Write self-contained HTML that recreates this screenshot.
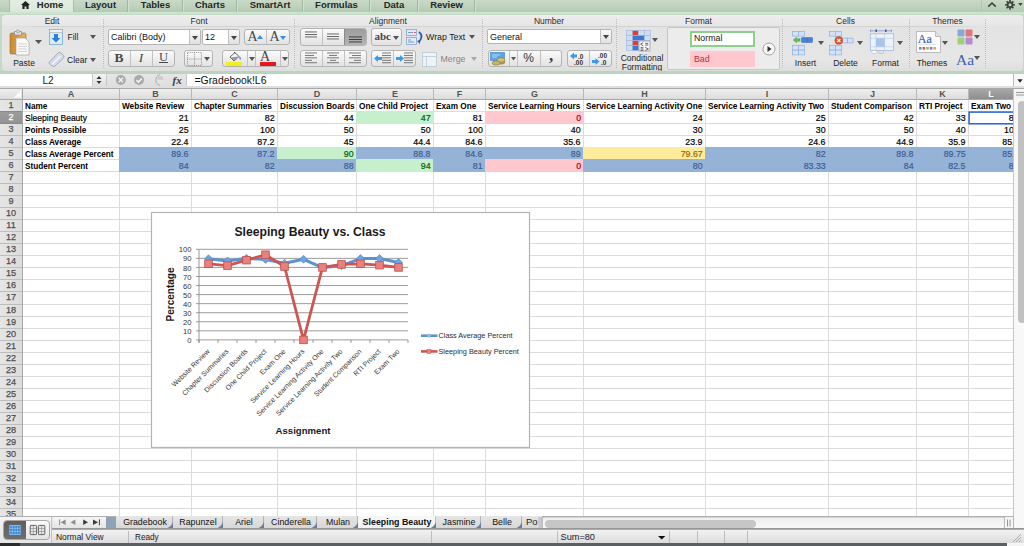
<!DOCTYPE html>
<html><head><meta charset="utf-8"><style>
*{margin:0;padding:0;box-sizing:border-box}
html,body{width:1024px;height:546px;overflow:hidden;background:#fff;font-family:"Liberation Sans", sans-serif;}
div{position:absolute}
.t{white-space:nowrap;line-height:1}
.btn{background:linear-gradient(#fbfbfb,#e2e2e2);border:1px solid #b3b3b3;border-radius:3px}
.sep{border-left:1px dotted #b8b8b8}
</style></head><body>

<div style="left:0px;top:0px;width:1024px;height:13px;background:linear-gradient(#c9dac7,#b3c9b1);"></div>
<div style="left:9px;top:0px;width:65px;height:14px;background:linear-gradient(#e4eee3,#d8e6d7);border-left:1px solid #a9c0a7;border-right:1px solid #a9c0a7;"></div>
<div style="left:127px;top:0px;width:1px;height:12.5px;background:#a0b89e;"></div>
<div style="left:128px;top:0px;width:1px;height:12.5px;background:#d3e1d1;"></div>
<div style="left:182px;top:0px;width:1px;height:12.5px;background:#a0b89e;"></div>
<div style="left:183px;top:0px;width:1px;height:12.5px;background:#d3e1d1;"></div>
<div style="left:236px;top:0px;width:1px;height:12.5px;background:#a0b89e;"></div>
<div style="left:237px;top:0px;width:1px;height:12.5px;background:#d3e1d1;"></div>
<div style="left:302px;top:0px;width:1px;height:12.5px;background:#a0b89e;"></div>
<div style="left:303px;top:0px;width:1px;height:12.5px;background:#d3e1d1;"></div>
<div style="left:369px;top:0px;width:1px;height:12.5px;background:#a0b89e;"></div>
<div style="left:370px;top:0px;width:1px;height:12.5px;background:#d3e1d1;"></div>
<div style="left:417px;top:0px;width:1px;height:12.5px;background:#a0b89e;"></div>
<div style="left:418px;top:0px;width:1px;height:12.5px;background:#d3e1d1;"></div>
<div style="left:474px;top:0px;width:1px;height:12.5px;background:#a0b89e;"></div>
<div style="left:475px;top:0px;width:1px;height:12.5px;background:#d3e1d1;"></div>
<svg style="position:absolute;left:20.5px;top:0.7px" width="9" height="8" viewBox="0 0 9 8"><path d="M4.5 0 L9 4 L7.6 4 L7.6 8 L5.4 8 L5.4 5.4 L3.6 5.4 L3.6 8 L1.4 8 L1.4 4 L0 4 Z" fill="#222"/></svg>
<div class="t" style="left:-150.0px;width:400px;text-align:center;top:0.2px;font-size:9.5px;font-weight:bold;color:#262626;transform:scaleX(1.0);transform-origin:50% 0;">Home</div>
<div class="t" style="left:-99.5px;width:400px;text-align:center;top:0.2px;font-size:9.5px;font-weight:bold;color:#262626;transform:scaleX(1.0);transform-origin:50% 0;">Layout</div>
<div class="t" style="left:-44.5px;width:400px;text-align:center;top:0.2px;font-size:9.5px;font-weight:bold;color:#262626;transform:scaleX(1.0);transform-origin:50% 0;">Tables</div>
<div class="t" style="left:10.0px;width:400px;text-align:center;top:0.2px;font-size:9.5px;font-weight:bold;color:#262626;transform:scaleX(1.0);transform-origin:50% 0;">Charts</div>
<div class="t" style="left:70.0px;width:400px;text-align:center;top:0.2px;font-size:9.5px;font-weight:bold;color:#262626;transform:scaleX(1.0);transform-origin:50% 0;">SmartArt</div>
<div class="t" style="left:136.5px;width:400px;text-align:center;top:0.2px;font-size:9.5px;font-weight:bold;color:#262626;transform:scaleX(1.0);transform-origin:50% 0;">Formulas</div>
<div class="t" style="left:194.0px;width:400px;text-align:center;top:0.2px;font-size:9.5px;font-weight:bold;color:#262626;transform:scaleX(1.0);transform-origin:50% 0;">Data</div>
<div class="t" style="left:246.5px;width:400px;text-align:center;top:0.2px;font-size:9.5px;font-weight:bold;color:#262626;transform:scaleX(1.0);transform-origin:50% 0;">Review</div>
<div style="left:981px;top:0px;width:1px;height:11px;background:#b2c6b0;"></div>
<svg style="position:absolute;left:987px;top:1px" width="10" height="7" viewBox="0 0 10 7"><path d="M1.3 5.6 L5 2 L8.7 5.6" stroke="#3a3f3a" stroke-width="1.5" fill="none"/></svg>
<svg style="position:absolute;left:1003px;top:0px" width="21" height="12" viewBox="0 0 21 12"><path d="M10.29 3.93 L11.83 3.97 L11.83 5.63 L10.29 5.67 L9.94 6.51 L11.00 7.63 L9.83 8.80 L8.71 7.74 L7.87 8.09 L7.83 9.63 L6.17 9.63 L6.13 8.09 L5.29 7.74 L4.17 8.80 L3.00 7.63 L4.06 6.51 L3.71 5.67 L2.17 5.63 L2.17 3.97 L3.71 3.93 L4.06 3.09 L3.00 1.97 L4.17 0.80 L5.29 1.86 L6.13 1.51 L6.17 -0.03 L7.83 -0.03 L7.87 1.51 L8.71 1.86 L9.83 0.80 L11.00 1.97 L9.94 3.09 Z" fill="#3f463f"/><circle cx="7" cy="4.8" r="1.5" fill="#c3d3c1"/><path d="M15.2 3 L19.6 3 L17.4 6 Z" fill="#3f463f"/></svg>
<div style="left:0px;top:13px;width:1024px;height:60px;background:#c4dac6;"></div>
<div style="left:0px;top:12px;width:1024px;height:2px;background:#cfe3d2;"></div>
<div style="left:2px;top:15px;width:1020.5px;height:56px;background:linear-gradient(#ececec,#e3e3e3 20%,#e6e6e6 80%,#dedede);border-radius:4px;"></div>
<div style="left:2px;top:15px;width:1020.5px;height:11px;background:linear-gradient(#ededed,#e6e6e6);border-radius:4px 4px 0 0;"></div>
<div style="left:8px;top:26px;width:977px;height:1px;background:linear-gradient(90deg,#e4e4e4,#d3d3d3 3%,#d3d3d3 97%,#e4e4e4);"></div>
<div class="t" style="left:-148px;width:400px;text-align:center;top:16.5px;font-size:8.5px;font-weight:normal;color:#2b2b2b;transform:scaleX(1.0);transform-origin:50% 0;">Edit</div>
<div class="t" style="left:-1px;width:400px;text-align:center;top:16.5px;font-size:8.5px;font-weight:normal;color:#2b2b2b;transform:scaleX(1.0);transform-origin:50% 0;">Font</div>
<div class="t" style="left:188px;width:400px;text-align:center;top:16.5px;font-size:8.5px;font-weight:normal;color:#2b2b2b;transform:scaleX(1.0);transform-origin:50% 0;">Alignment</div>
<div class="t" style="left:349px;width:400px;text-align:center;top:16.5px;font-size:8.5px;font-weight:normal;color:#2b2b2b;transform:scaleX(1.0);transform-origin:50% 0;">Number</div>
<div class="t" style="left:498.5px;width:400px;text-align:center;top:16.5px;font-size:8.5px;font-weight:normal;color:#2b2b2b;transform:scaleX(1.0);transform-origin:50% 0;">Format</div>
<div class="t" style="left:645.5px;width:400px;text-align:center;top:16.5px;font-size:8.5px;font-weight:normal;color:#2b2b2b;transform:scaleX(1.0);transform-origin:50% 0;">Cells</div>
<div class="t" style="left:747.5px;width:400px;text-align:center;top:16.5px;font-size:8.5px;font-weight:normal;color:#2b2b2b;transform:scaleX(1.0);transform-origin:50% 0;">Themes</div>
<div style="left:103px;top:19px;width:1px;height:49px;border-left:1px dotted #bdbdbd;"></div>
<div style="left:294px;top:19px;width:1px;height:49px;border-left:1px dotted #bdbdbd;"></div>
<div style="left:482px;top:19px;width:1px;height:49px;border-left:1px dotted #bdbdbd;"></div>
<div style="left:616px;top:19px;width:1px;height:49px;border-left:1px dotted #bdbdbd;"></div>
<div style="left:782px;top:19px;width:1px;height:49px;border-left:1px dotted #bdbdbd;"></div>
<div style="left:909px;top:19px;width:1px;height:49px;border-left:1px dotted #bdbdbd;"></div>
<div style="left:985px;top:19px;width:1px;height:49px;border-left:1px dotted #bdbdbd;"></div>
<svg style="position:absolute;left:9px;top:29px" width="22" height="27" viewBox="0 0 22 27">
<defs><linearGradient id="cb" x1="0" x2="1"><stop offset="0" stop-color="#c98a2e"/><stop offset="1" stop-color="#e7b25c"/></linearGradient></defs>
<rect x="1" y="4" width="16" height="21" rx="1.5" fill="url(#cb)" stroke="#9b6a23" stroke-width="0.6"/>
<path d="M5.5 2.5 h7 v3.5 h-7 z" fill="#e8e8e8" stroke="#777" stroke-width="0.6"/>
<circle cx="9" cy="2.5" r="1.6" fill="#ddd" stroke="#777" stroke-width="0.5"/>
<path d="M7 9 h9 l4 4 v13 h-13 z" fill="#fafafa" stroke="#999" stroke-width="0.6"/>
<path d="M9 15h9M9 17.5h9M9 20h9M9 22.5h9" stroke="#bbb" stroke-width="0.6"/>
</svg>
<svg style="position:absolute;left:35px;top:40px" width="7" height="5"><path d="M0 0 L7 0 L3.5 4 Z" fill="#555"/></svg>
<div class="t" style="left:-176px;width:400px;text-align:center;top:59px;font-size:8.5px;font-weight:normal;color:#222;transform:scaleX(1.0);transform-origin:50% 0;">Paste</div>
<svg style="position:absolute;left:49px;top:29px" width="14" height="16" viewBox="0 0 14 16">
<rect x="0.5" y="0.5" width="13" height="15" fill="#d8ecfb" stroke="#7aa7cc" stroke-width="0.8"/>
<rect x="0.5" y="0.5" width="13" height="3" fill="#f2f2f2" stroke="#999" stroke-width="0.5"/>
<path d="M5 5 h4 v4 h2.5 l-4.5 4.5 l-4.5 -4.5 h2.5 z" fill="#2f7fd6"/>
</svg>
<div class="t" style="left:67.5px;top:33px;font-size:8.5px;font-weight:normal;color:#222;transform:scaleX(1.0);transform-origin:0 0;">Fill</div>
<svg style="position:absolute;left:90px;top:35px" width="7" height="5"><path d="M0 0 L6 0 L3 4 Z" fill="#555"/></svg>
<svg style="position:absolute;left:48px;top:51px" width="17" height="16" viewBox="0 0 17 16">
<path d="M1.5 11 L10 2 Q11.5 0.8 13 2 L15.5 4.5 Q16.5 6 15.5 7 L7 15 Q5.5 16 4 15 L1.5 12.8 Q0.5 12 1.5 11 Z" fill="#d7dde8" stroke="#8c94a3" stroke-width="0.7"/>
<path d="M4 13.5 L12.5 5" stroke="#f4f6fa" stroke-width="1.2"/>
</svg>
<div class="t" style="left:67px;top:55.5px;font-size:8.5px;font-weight:normal;color:#222;transform:scaleX(1.0);transform-origin:0 0;">Clear</div>
<svg style="position:absolute;left:90px;top:57.5px" width="7" height="5"><path d="M0 0 L6 0 L3 4 Z" fill="#555"/></svg>
<div style="left:108px;top:29px;width:93px;height:16px;background:#fff;border:1px solid #b5b5b5;border-radius:2px;"></div>
<div style="left:189px;top:30px;width:11px;height:14px;background:linear-gradient(#fafafa,#e0e0e0);border-left:1px solid #c0c0c0;"></div>
<div class="t" style="left:111px;top:33px;font-size:9px;font-weight:normal;color:#111;transform:scaleX(1.0);transform-origin:0 0;">Calibri (Body)</div>
<svg style="position:absolute;left:192px;top:35.5px" width="6" height="4"><path d="M0 0 L6 0 L3 4 Z" fill="#444"/></svg>
<div style="left:202px;top:29px;width:38px;height:16px;background:#fff;border:1px solid #b5b5b5;border-radius:2px;"></div>
<div style="left:228px;top:30px;width:11px;height:14px;background:linear-gradient(#fafafa,#e0e0e0);border-left:1px solid #c0c0c0;"></div>
<div class="t" style="left:205px;top:33px;font-size:9px;font-weight:normal;color:#111;transform:scaleX(1.0);transform-origin:0 0;">12</div>
<svg style="position:absolute;left:231px;top:35.5px" width="6" height="4"><path d="M0 0 L6 0 L3 4 Z" fill="#444"/></svg>
<div class="btn" style="left:244px;top:29px;width:46px;height:16px;"></div>
<div style="left:266px;top:30px;width:1px;height:14px;background:#c2c2c2;"></div>
<div class="t" style="left:247.5px;top:29.5px;font-size:14px;font-weight:normal;color:#444;transform:scaleX(1.0);transform-origin:0 0;font-family:&quot;Liberation Serif&quot;,serif;">A</div>
<svg style="position:absolute;left:257px;top:35px" width="6" height="4"><path d="M0 4 L6 4 L3 0 Z" fill="#3a8ee6"/></svg>
<div class="t" style="left:269.5px;top:29.5px;font-size:14px;font-weight:normal;color:#444;transform:scaleX(1.0);transform-origin:0 0;font-family:&quot;Liberation Serif&quot;,serif;">A</div>
<svg style="position:absolute;left:280px;top:36px" width="6" height="4"><path d="M0 0 L6 0 L3 4 Z" fill="#3a8ee6"/></svg>
<div class="btn" style="left:108px;top:50px;width:67px;height:17px;"></div>
<div style="left:130px;top:51px;width:1px;height:15px;background:#c2c2c2;"></div>
<div style="left:152px;top:51px;width:1px;height:15px;background:#c2c2c2;"></div>
<div class="t" style="left:-81px;width:400px;text-align:center;top:50.5px;font-size:13.5px;font-weight:bold;color:#484848;transform:scaleX(1.0);transform-origin:50% 0;font-family:&quot;Liberation Serif&quot;,serif;">B</div>
<div class="t" style="left:-59px;width:400px;text-align:center;top:50.5px;font-size:13.5px;font-weight:normal;color:#484848;transform:scaleX(1.0);transform-origin:50% 0;font-family:&quot;Liberation Serif&quot;,serif;font-style:italic;">I</div>
<div class="t" style="left:-36.5px;width:400px;text-align:center;top:51px;font-size:12.5px;font-weight:normal;color:#484848;transform:scaleX(1.0);transform-origin:50% 0;font-family:&quot;Liberation Serif&quot;,serif;text-decoration:underline;">U</div>
<div class="btn" style="left:184px;top:50px;width:29px;height:17px;"></div>
<svg style="position:absolute;left:187px;top:51.5px" width="15" height="14"><path d="M0.5 0.5h14v13h-14z M7.5 0v14 M0 7h15" stroke="#8a8a8a" stroke-width="0.8" stroke-dasharray="1.2 0.9" fill="none"/></svg>
<svg style="position:absolute;left:204px;top:57px" width="6" height="4"><path d="M0 0 L6 0 L3 4 Z" fill="#555"/></svg>
<div class="btn" style="left:222px;top:50px;width:67px;height:17px;"></div>
<div style="left:247px;top:51px;width:1px;height:15px;background:#c2c2c2;"></div>
<div style="left:255px;top:51px;width:1px;height:15px;background:#c2c2c2;"></div>
<div style="left:280px;top:51px;width:1px;height:15px;background:#c2c2c2;"></div>
<svg style="position:absolute;left:227px;top:51px" width="16" height="11" viewBox="0 0 16 11"><path d="M3 6 L8 1.5 L12 5.5 L7 10 Z" fill="#f4f4f4" stroke="#444" stroke-width="0.8"/><path d="M4 6.5 L11 5.5 L7 9.5 Z" fill="#999"/><path d="M12.5 5 q2 2 1 4 q-1.5 -1 -1 -4" fill="#2a6bcf"/><path d="M7 1 l1.5 1.5" stroke="#444"/></svg>
<div style="left:226px;top:62px;width:16px;height:4px;background:#f2ee1a;"></div>
<svg style="position:absolute;left:249px;top:57px" width="6" height="4"><path d="M0 0 L6 0 L3 4 Z" fill="#555"/></svg>
<div class="t" style="left:260px;top:49.5px;font-size:14px;font-weight:normal;color:#444;transform:scaleX(1.0);transform-origin:0 0;font-family:&quot;Liberation Serif&quot;,serif;">A</div>
<div style="left:260px;top:62px;width:16px;height:4px;background:#e8151b;"></div>
<svg style="position:absolute;left:282px;top:57px" width="6" height="4"><path d="M0 0 L6 0 L3 4 Z" fill="#555"/></svg>
<div class="btn" style="left:300px;top:28px;width:67px;height:18px;"></div>
<div style="left:345px;top:29px;width:21px;height:16px;background:linear-gradient(#9c9c9c,#b4b4b4);border-radius:0 2px 2px 0;"></div>
<div style="left:322px;top:29px;width:1px;height:16px;background:#c2c2c2;"></div>
<div style="left:344px;top:29px;width:1px;height:16px;background:#8a8a8a;"></div>
<svg style="position:absolute;left:305px;top:30.5px" width="12" height="9.5"><rect x="0" y="0.5" width="12" height="0.9" fill="#5a5a5a"/><rect x="0" y="3.0" width="12" height="0.9" fill="#5a5a5a"/><rect x="0" y="5.5" width="12" height="0.9" fill="#5a5a5a"/></svg>
<svg style="position:absolute;left:327px;top:33px" width="12" height="9.5"><rect x="0" y="0.5" width="12" height="0.9" fill="#5a5a5a"/><rect x="0" y="3.0" width="12" height="0.9" fill="#5a5a5a"/><rect x="0" y="5.5" width="12" height="0.9" fill="#5a5a5a"/></svg>
<svg style="position:absolute;left:349px;top:35.5px" width="13" height="9.5"><rect x="0" y="0.5" width="13" height="0.9" fill="#333"/><rect x="0" y="3.0" width="13" height="0.9" fill="#333"/><rect x="0" y="5.5" width="13" height="0.9" fill="#333"/></svg>
<div class="btn" style="left:371px;top:28px;width:31px;height:18px;"></div>
<div class="t" style="left:374.5px;top:31.2px;font-size:11px;font-weight:bold;color:#4a4a4a;transform:scaleX(1.0);transform-origin:0 0;font-family:&quot;Liberation Serif&quot;,serif;">abc</div>
<svg style="position:absolute;left:393px;top:35.5px" width="6" height="4"><path d="M0 0 L6 0 L3 4 Z" fill="#555"/></svg>
<svg style="position:absolute;left:406px;top:29px" width="19" height="16" viewBox="0 0 19 16">
<rect x="0.5" y="0.5" width="10" height="6" fill="#dfe9f7" stroke="#7b9ccb" stroke-width="0.7"/>
<rect x="0.5" y="8.5" width="10" height="7" fill="#dfe9f7" stroke="#7b9ccb" stroke-width="0.7"/>
<path d="M2 3.5h5M2 11h3M2 13h6" stroke="#6686b3" stroke-width="0.8"/><path d="M8 3.5h2" stroke="#e33" stroke-width="0.8"/>
<path d="M13 3 q5 4 0 10" stroke="#1f5fae" stroke-width="1.8" fill="none"/><path d="M11 12 l3 3 l0 -4 z" fill="#1f5fae"/>
</svg>
<div class="t" style="left:426px;top:33px;font-size:8.8px;font-weight:normal;color:#1a1a1a;transform:scaleX(1.0);transform-origin:0 0;">Wrap Text</div>
<svg style="position:absolute;left:469px;top:35px" width="6" height="4"><path d="M0 0 L6 0 L3 4 Z" fill="#555"/></svg>
<div class="btn" style="left:300px;top:50px;width:67px;height:17px;"></div>
<div style="left:322px;top:51px;width:1px;height:15px;background:#c2c2c2;"></div>
<div style="left:344px;top:51px;width:1px;height:15px;background:#c2c2c2;"></div>
<svg style="position:absolute;left:305px;top:52.3px" width="12" height="14.25"><rect x="0" y="0.5" width="12" height="0.9" fill="#6a6a6a"/><rect x="0" y="2.95" width="9" height="0.9" fill="#6a6a6a"/><rect x="0" y="5.4" width="12" height="0.9" fill="#6a6a6a"/><rect x="0" y="7.8500000000000005" width="7" height="0.9" fill="#6a6a6a"/><rect x="0" y="10.3" width="12" height="0.9" fill="#6a6a6a"/></svg>
<svg style="position:absolute;left:327px;top:52.3px" width="12" height="14.25"><rect x="0.0" y="0.5" width="12" height="0.9" fill="#6a6a6a"/><rect x="2.0" y="2.95" width="8" height="0.9" fill="#6a6a6a"/><rect x="0.0" y="5.4" width="12" height="0.9" fill="#6a6a6a"/><rect x="3.0" y="7.8500000000000005" width="6" height="0.9" fill="#6a6a6a"/><rect x="0.0" y="10.3" width="12" height="0.9" fill="#6a6a6a"/></svg>
<svg style="position:absolute;left:349px;top:52.3px" width="12" height="14.25"><rect x="0" y="0.5" width="12" height="0.9" fill="#6a6a6a"/><rect x="3" y="2.95" width="9" height="0.9" fill="#6a6a6a"/><rect x="0" y="5.4" width="12" height="0.9" fill="#6a6a6a"/><rect x="5" y="7.8500000000000005" width="7" height="0.9" fill="#6a6a6a"/><rect x="0" y="10.3" width="12" height="0.9" fill="#6a6a6a"/></svg>
<div class="btn" style="left:371px;top:50px;width:45px;height:17px;"></div>
<div style="left:393px;top:51px;width:1px;height:15px;background:#c2c2c2;"></div>
<svg style="position:absolute;left:382px;top:52.3px" width="9" height="14.25"><rect x="0" y="0.5" width="9" height="0.9" fill="#6a6a6a"/><rect x="0" y="2.95" width="9" height="0.9" fill="#6a6a6a"/><rect x="0" y="5.4" width="9" height="0.9" fill="#6a6a6a"/><rect x="0" y="7.8500000000000005" width="9" height="0.9" fill="#6a6a6a"/><rect x="0" y="10.3" width="9" height="0.9" fill="#6a6a6a"/></svg>
<svg style="position:absolute;left:374px;top:55px" width="8" height="7"><path d="M0 3.5 L4 0 L4 2 L8 2 L8 5 L4 5 L4 7 Z" fill="#3b9be8"/></svg>
<svg style="position:absolute;left:404px;top:52.3px" width="9" height="14.25"><rect x="0" y="0.5" width="9" height="0.9" fill="#6a6a6a"/><rect x="0" y="2.95" width="9" height="0.9" fill="#6a6a6a"/><rect x="0" y="5.4" width="9" height="0.9" fill="#6a6a6a"/><rect x="0" y="7.8500000000000005" width="9" height="0.9" fill="#6a6a6a"/><rect x="0" y="10.3" width="9" height="0.9" fill="#6a6a6a"/></svg>
<svg style="position:absolute;left:396px;top:55px" width="8" height="7"><path d="M8 3.5 L4 0 L4 2 L0 2 L0 5 L4 5 L4 7 Z" fill="#3b9be8"/></svg>
<svg style="position:absolute;left:422px;top:52px" width="15" height="15"><rect x="0.5" y="0.5" width="14" height="14" fill="#eef3f7" stroke="#b9c7d3" stroke-width="0.8"/><path d="M0 4.5h15M4.5 4.5v10" stroke="#b9c7d3" stroke-width="0.8"/></svg>
<div class="t" style="left:440.5px;top:55px;font-size:8.8px;font-weight:normal;color:#858585;transform:scaleX(1.0);transform-origin:0 0;">Merge</div>
<svg style="position:absolute;left:471px;top:57px" width="6" height="4"><path d="M0 0 L6 0 L3 4 Z" fill="#aaa"/></svg>
<div style="left:487px;top:29px;width:125px;height:15px;background:#fff;border:1px solid #b5b5b5;border-radius:2px;"></div>
<div style="left:600px;top:30px;width:11px;height:13px;background:linear-gradient(#fafafa,#e0e0e0);border-left:1px solid #c0c0c0;"></div>
<div class="t" style="left:490px;top:32.5px;font-size:9px;font-weight:normal;color:#111;transform:scaleX(1.0);transform-origin:0 0;">General</div>
<svg style="position:absolute;left:603px;top:35px" width="6" height="4"><path d="M0 0 L6 0 L3 4 Z" fill="#444"/></svg>
<div class="btn" style="left:488px;top:50px;width:74px;height:17px;"></div>
<div style="left:509px;top:51px;width:1px;height:15px;background:#c2c2c2;"></div>
<div style="left:517px;top:51px;width:1px;height:15px;background:#c2c2c2;"></div>
<div style="left:540px;top:51px;width:1px;height:15px;background:#c2c2c2;"></div>
<svg style="position:absolute;left:490px;top:52px" width="18" height="14" viewBox="0 0 18 14"><rect x="0.5" y="0.5" width="14" height="8" fill="#5aa6e8" stroke="#3b7fc0" stroke-width="0.6"/><path d="M2 3h8M2 5h5" stroke="#cfe6fb" stroke-width="0.8"/><ellipse cx="11" cy="10" rx="4" ry="2.2" fill="#b5a35a" stroke="#7d6e2c" stroke-width="0.5"/><ellipse cx="11" cy="8" rx="4" ry="2.2" fill="#d2c27a" stroke="#7d6e2c" stroke-width="0.5"/><ellipse cx="6" cy="11" rx="4" ry="2.2" fill="#c7b66c" stroke="#7d6e2c" stroke-width="0.5"/></svg>
<svg style="position:absolute;left:511px;top:57px" width="5" height="4"><path d="M0 0 L5 0 L2.5 3.5 Z" fill="#555"/></svg>
<div class="t" style="left:328.5px;width:400px;text-align:center;top:52px;font-size:12px;font-weight:normal;color:#333;transform:scaleX(1.0);transform-origin:50% 0;">%</div>
<div class="t" style="left:351px;width:400px;text-align:center;top:46.5px;font-size:17px;font-weight:bold;color:#3a3a3a;transform:scaleX(1.0);transform-origin:50% 0;font-family:&quot;Liberation Serif&quot;,serif;">,</div>
<div class="btn" style="left:567px;top:50px;width:45px;height:17px;"></div>
<div style="left:589px;top:51px;width:1px;height:15px;background:#c2c2c2;"></div>
<svg style="position:absolute;left:569px;top:52px" width="19" height="13"><path d="M1 4 L5 0.5 L5 2.5 L8 2.5 L8 5.5 L5 5.5 L5 7.5 Z" fill="#3b9be8"/><text x="9" y="6.5" font-size="6.5" font-family="Liberation Sans" font-weight="bold" fill="#333">.0</text><text x="5" y="12.5" font-size="6.5" font-family="Liberation Sans" font-weight="bold" fill="#333">.00</text></svg>
<svg style="position:absolute;left:591px;top:52px" width="19" height="13"><text x="7" y="5.5" font-size="6.5" font-family="Liberation Sans" font-weight="bold" fill="#333">.00</text><path d="M8.5 9.5 L4.5 6 L4.5 8 L1 8 L1 11 L4.5 11 L4.5 13 Z" fill="#3b9be8"/><text x="10" y="12.5" font-size="6.5" font-family="Liberation Sans" font-weight="bold" fill="#333">.0</text></svg>
<svg style="position:absolute;left:626px;top:30px" width="26" height="22" viewBox="0 0 26 22">
<g stroke="#9fb8dc" stroke-width="0.6">
<rect x="0.5" y="0.5" width="6" height="5" fill="#cfdcf2"/><rect x="6.5" y="0.5" width="6" height="5" fill="#e53c2e"/><rect x="12.5" y="0.5" width="6" height="5" fill="#cfdcf2"/><rect x="18.5" y="0.5" width="6" height="5" fill="#cfdcf2"/>
<rect x="0.5" y="5.5" width="6" height="5" fill="#cfdcf2"/><rect x="6.5" y="5.5" width="12" height="5" fill="#3c78d8"/><rect x="18.5" y="5.5" width="6" height="5" fill="#cfdcf2"/>
<rect x="0.5" y="10.5" width="6" height="5" fill="#cfdcf2"/><rect x="6.5" y="10.5" width="6" height="5" fill="#e53c2e"/><rect x="12.5" y="10.5" width="6" height="5" fill="#cfdcf2"/>
<rect x="0.5" y="15.5" width="6" height="5" fill="#cfdcf2"/><rect x="6.5" y="15.5" width="6" height="5" fill="#3c78d8"/>
</g>
<rect x="13" y="11" width="11" height="10" fill="#f4f4f4" stroke="#888" stroke-width="0.6"/>
<path d="M17.2 12.6 L14.6 14.2 L17.2 15.8 M19.2 13.4h3 M19.2 15h3 M14.6 17.6h2.8 M14.6 19h2.8 M14.6 20.4h2.8 M19.2 17.4 L22.4 19 L19.2 20.6" stroke="#444" stroke-width="0.75" fill="none"/>
</svg>
<svg style="position:absolute;left:652px;top:38px" width="6" height="4"><path d="M0 0 L6 0 L3 4 Z" fill="#555"/></svg>
<div class="t" style="left:442px;width:400px;text-align:center;top:54px;font-size:8.5px;font-weight:normal;color:#222;transform:scaleX(1.0);transform-origin:50% 0;">Conditional</div>
<div class="t" style="left:442px;width:400px;text-align:center;top:62.5px;font-size:8.5px;font-weight:normal;color:#222;transform:scaleX(1.0);transform-origin:50% 0;">Formatting</div>
<div style="left:667px;top:27px;width:113px;height:43px;background:#ececec;border:1px solid #c6c6c6;border-radius:2px;"></div>
<div style="left:690px;top:31px;width:65px;height:16px;background:#fff;border:2px solid #8fcf8d;"></div>
<div class="t" style="left:694px;top:34px;font-size:8.8px;font-weight:normal;color:#222;transform:scaleX(1.0);transform-origin:0 0;">Normal</div>
<div style="left:690px;top:51px;width:65px;height:16px;background:#ffc7ce;"></div>
<div class="t" style="left:694px;top:55px;font-size:8.8px;font-weight:normal;color:#b8303f;transform:scaleX(1.0);transform-origin:0 0;">Bad</div>
<svg style="position:absolute;left:762px;top:42px" width="14" height="14"><circle cx="7" cy="7" r="6" fill="#f7f7f7" stroke="#9a9a9a" stroke-width="0.9"/><path d="M5.5 4 L9.5 7 L5.5 10 Z" fill="#333"/></svg>
<svg style="position:absolute;left:0;top:0" width="1024" height="80"><rect x="792.5" y="31.5" width="6" height="4.6" fill="#d3e2f7" stroke="#8fb0dd" stroke-width="0.7"/><rect x="798.5" y="31.5" width="6" height="4.6" fill="#d3e2f7" stroke="#8fb0dd" stroke-width="0.7"/><rect x="792.5" y="45.3" width="6" height="4.8" fill="#d3e2f7" stroke="#8fb0dd" stroke-width="0.7"/><rect x="798.5" y="45.3" width="6" height="4.8" fill="#d3e2f7" stroke="#8fb0dd" stroke-width="0.7"/><rect x="792.5" y="50.099999999999994" width="6" height="4.8" fill="#d3e2f7" stroke="#8fb0dd" stroke-width="0.7"/><rect x="798.5" y="50.099999999999994" width="6" height="4.8" fill="#d3e2f7" stroke="#8fb0dd" stroke-width="0.7"/><rect x="801.5" y="37.6" width="11" height="4.8" rx="0.6" fill="#4a82dc" stroke="#2f63b8" stroke-width="0.5"/><path d="M807 37.8v4.4" stroke="#2f63b8" stroke-width="0.5"/><path d="M793.2 40 L796.6 37.2 L796.6 38.7 L800 38.7 L800 41.3 L796.6 41.3 L796.6 42.8 Z" fill="#5cc04e" stroke="#3d9a33" stroke-width="0.4"/><rect x="829.5" y="31.5" width="6" height="4.6" fill="#d3e2f7" stroke="#8fb0dd" stroke-width="0.7"/><rect x="835.5" y="31.5" width="6" height="4.6" fill="#d3e2f7" stroke="#8fb0dd" stroke-width="0.7"/><rect x="829.5" y="45.3" width="6" height="4.8" fill="#d3e2f7" stroke="#8fb0dd" stroke-width="0.7"/><rect x="835.5" y="45.3" width="6" height="4.8" fill="#d3e2f7" stroke="#8fb0dd" stroke-width="0.7"/><rect x="829.5" y="50.099999999999994" width="6" height="4.8" fill="#d3e2f7" stroke="#8fb0dd" stroke-width="0.7"/><rect x="835.5" y="50.099999999999994" width="6" height="4.8" fill="#d3e2f7" stroke="#8fb0dd" stroke-width="0.7"/><rect x="842.0" y="38.1" width="5.5" height="4.8" fill="#d3e2f7" stroke="#8fb0dd" stroke-width="0.7"/><rect x="847.5" y="38.1" width="5.5" height="4.8" fill="#d3e2f7" stroke="#8fb0dd" stroke-width="0.7"/><circle cx="838.8" cy="40.4" r="3.9" fill="#e4572e" stroke="#b23a17" stroke-width="0.5"/><path d="M837.2 38.8l3.2 3.2M840.4 38.8l-3.2 3.2" stroke="#fff" stroke-width="1.1"/><path d="M870.5 30.8h21M870.5 29.6v2.4M891.5 29.6v2.4" stroke="#5a7fb8" stroke-width="0.6"/><path d="M876.2 29.6v2.4M885.8 29.6v2.4" stroke="#23488a" stroke-width="1.3"/><rect x="870.3" y="33.8" width="23.4" height="16.6" fill="#eef3fb" stroke="#9ab4dd" stroke-width="0.7"/><path d="M870.3 38.3h23.4M870.3 46.8h23.4M876 33.8v16.6M884.6 33.8v16.6" stroke="#b4c8e8" stroke-width="0.6"/><rect x="876" y="38.3" width="8.6" height="8.5" fill="#a9c3ec"/><rect x="872" y="50.4" width="5" height="3" rx="1" fill="#fff" stroke="#9aa" stroke-width="0.5"/><rect x="878.5" y="50.4" width="5" height="3" rx="1" fill="#dce6f5" stroke="#9aa" stroke-width="0.5"/></svg>
<svg style="position:absolute;left:818px;top:41px" width="6" height="4"><path d="M0 0 L6 0 L3 4 Z" fill="#555"/></svg>
<div class="t" style="left:605.5px;width:400px;text-align:center;top:59px;font-size:8.5px;font-weight:normal;color:#222;transform:scaleX(1.0);transform-origin:50% 0;">Insert</div>
<svg style="position:absolute;left:857px;top:41px" width="6" height="4"><path d="M0 0 L6 0 L3 4 Z" fill="#555"/></svg>
<div class="t" style="left:645.5px;width:400px;text-align:center;top:59px;font-size:8.5px;font-weight:normal;color:#222;transform:scaleX(1.0);transform-origin:50% 0;">Delete</div>
<svg style="position:absolute;left:897px;top:41px" width="6" height="4"><path d="M0 0 L6 0 L3 4 Z" fill="#555"/></svg>
<div class="t" style="left:685.5px;width:400px;text-align:center;top:59px;font-size:8.5px;font-weight:normal;color:#222;transform:scaleX(1.0);transform-origin:50% 0;">Format</div>
<svg style="position:absolute;left:916px;top:31px" width="26" height="22" viewBox="0 0 26 22">
<path d="M0.5 0.5h19l5 5v16h-24z" fill="#fdfdfd" stroke="#a5a5a5" stroke-width="0.7"/><path d="M19.5 0.5v5h5" fill="#e3e3e3" stroke="#a5a5a5" stroke-width="0.7"/>
<text x="1.8" y="11.5" font-family="Liberation Serif" font-size="12" fill="#3b62b0" stroke="#3b62b0" stroke-width="0.2">Aa</text>
<path d="M2 13.5h18" stroke="#ccc" stroke-width="0.6"/>
<rect x="3" y="16" width="2.6" height="2.6" fill="#5b8fd6"/><rect x="6.6" y="16" width="2.6" height="2.6" fill="#d9534f"/><rect x="10.2" y="16" width="2.6" height="2.6" fill="#8fbf5a"/><rect x="13.8" y="16" width="2.6" height="2.6" fill="#9a6fc2"/><rect x="17.4" y="16" width="2.6" height="2.6" fill="#f0a048"/>
</svg>
<svg style="position:absolute;left:942px;top:41px" width="6" height="4"><path d="M0 0 L6 0 L3 4 Z" fill="#555"/></svg>
<div class="t" style="left:732px;width:400px;text-align:center;top:59px;font-size:8.5px;font-weight:normal;color:#222;transform:scaleX(1.0);transform-origin:50% 0;">Themes</div>
<svg style="position:absolute;left:957px;top:29px" width="17" height="17"><rect x="0.5" y="0.5" width="7" height="7" rx="1" fill="#86a9d8"/><rect x="8.5" y="0.5" width="7" height="7" rx="1" fill="#e0767a"/><rect x="0.5" y="8.5" width="7" height="7" rx="1" fill="#9fcf7f"/><rect x="8.5" y="8.5" width="7" height="7" rx="1" fill="#b58ad3"/></svg>
<svg style="position:absolute;left:974px;top:35px" width="6" height="4"><path d="M0 0 L6 0 L3 4 Z" fill="#555"/></svg>
<div class="t" style="left:956px;top:52px;font-size:15.5px;font-weight:normal;color:#3b62b0;transform:scaleX(1.0);transform-origin:0 0;font-family:&quot;Liberation Serif&quot;,serif;">Aa</div>
<svg style="position:absolute;left:974px;top:56px" width="6" height="4"><path d="M0 0 L6 0 L3 4 Z" fill="#555"/></svg>
<div style="left:0px;top:71px;width:1024px;height:2px;background:#b9d5bc;"></div>
<div style="left:0px;top:73px;width:1024px;height:1px;background:#c9c9c9;"></div>
<div style="left:0px;top:74px;width:1024px;height:15px;background:linear-gradient(#e6e6e6,#dcdcdc);"></div>
<div style="left:0px;top:74px;width:92px;height:12px;background:#fff;"></div>
<div class="t" style="left:-152px;width:400px;text-align:center;top:75.5px;font-size:10px;font-weight:normal;color:#222;transform:scaleX(1.0);transform-origin:50% 0;">L2</div>
<div style="left:92px;top:74px;width:15px;height:12px;background:linear-gradient(#f4f4f4,#dedede);border-left:1px solid #c8c8c8;border-right:1px solid #c8c8c8;"></div>
<svg style="position:absolute;left:96px;top:75px" width="6" height="10"><path d="M0.5 4 L3 1 L5.5 4 Z M0.5 6 L3 9 L5.5 6 Z" fill="#333"/></svg>
<svg style="position:absolute;left:114px;top:74px" width="72" height="12" viewBox="0 0 72 12"><circle cx="6.8" cy="6" r="5" fill="#aaaaaa"/><path d="M4.6 3.8l4.4 4.4M9 3.8l-4.4 4.4" stroke="#f4f4f4" stroke-width="1.3"/><circle cx="25" cy="6" r="5" fill="#aaaaaa"/><path d="M22.4 6.1l2 2 3.4-3.7" stroke="#f4f4f4" stroke-width="1.5" fill="none"/><path d="M46 0.6 a5.6 5.6 0 0 0 0 10.8" stroke="#9a9a9a" stroke-width="0.8" fill="none"/><circle cx="46.4" cy="5.2" r="3" fill="#c9c9c9"/><rect x="43" y="5.6" width="7" height="3.5" fill="#e4e4e4"/><text x="58.5" y="9.8" font-family="Liberation Serif" font-style="italic" font-weight="bold" font-size="11" fill="#3a3a3a">fx</text></svg>
<div style="left:186px;top:74px;width:828px;height:12px;background:#fff;border-left:1px solid #c8c8c8;"></div>
<div class="t" style="left:194.5px;top:75.5px;font-size:10.4px;font-weight:normal;color:#111;transform:scaleX(1.0);transform-origin:0 0;">=Gradebook!L6</div>
<div style="left:1013px;top:73.5px;width:1px;height:13px;background:#bcbcbc;"></div>
<div style="left:1014px;top:74px;width:10px;height:12.5px;background:#f7f7f7;"></div>
<svg style="position:absolute;left:1017px;top:78.8px" width="7" height="5"><path d="M0.3 0.3 L5.7 0.3 L3 3.8 Z" fill="#2a2a2a"/></svg>
<div style="left:0px;top:86px;width:1024px;height:2px;background:#dedede;"></div>
<div style="left:0px;top:88px;width:1024px;height:1px;background:#a9a9a9;"></div>
<div style="left:0px;top:89px;width:1013px;height:10px;background:linear-gradient(#efefef,#dcdcdc);"></div>
<div style="left:968px;top:89px;width:45px;height:10px;background:linear-gradient(#a8a8a8,#8e8e8e);"></div>
<div style="left:0px;top:99px;width:22px;height:417px;background:linear-gradient(90deg,#e6e6e6,#dcdcdc);"></div>
<div style="left:0px;top:111px;width:22px;height:13px;background:linear-gradient(#9c9c9c,#939393);"></div>
<svg style="position:absolute;left:13px;top:90px" width="9" height="8"><path d="M8 0.5 L8 7.5 L0.5 7.5 Z" fill="#fbfbfb"/></svg>
<div style="left:23px;top:100px;width:990px;height:416px;background:#fff;"></div>
<div style="left:0px;top:99px;width:1013px;height:1px;background:#a8a8a8;"></div>
<div style="left:0px;top:111px;width:22px;height:1px;background:#8a8a8a;"></div>
<div style="left:23px;top:111px;width:990px;height:1px;background:#dcdcdc;"></div>
<div style="left:0px;top:123px;width:22px;height:1px;background:#8a8a8a;"></div>
<div style="left:23px;top:123px;width:990px;height:1px;background:#dcdcdc;"></div>
<div style="left:0px;top:135px;width:22px;height:1px;background:#bdbdbd;"></div>
<div style="left:23px;top:135px;width:990px;height:1px;background:#dcdcdc;"></div>
<div style="left:0px;top:147px;width:22px;height:1px;background:#bdbdbd;"></div>
<div style="left:23px;top:147px;width:990px;height:1px;background:#dcdcdc;"></div>
<div style="left:0px;top:159px;width:22px;height:1px;background:#bdbdbd;"></div>
<div style="left:23px;top:159px;width:990px;height:1px;background:#dcdcdc;"></div>
<div style="left:0px;top:171px;width:22px;height:1px;background:#bdbdbd;"></div>
<div style="left:23px;top:171px;width:990px;height:1px;background:#dcdcdc;"></div>
<div style="left:0px;top:183px;width:22px;height:1px;background:#bdbdbd;"></div>
<div style="left:23px;top:183px;width:990px;height:1px;background:#dcdcdc;"></div>
<div style="left:0px;top:195px;width:22px;height:1px;background:#bdbdbd;"></div>
<div style="left:23px;top:195px;width:990px;height:1px;background:#dcdcdc;"></div>
<div style="left:0px;top:207px;width:22px;height:1px;background:#bdbdbd;"></div>
<div style="left:23px;top:207px;width:990px;height:1px;background:#dcdcdc;"></div>
<div style="left:0px;top:219px;width:22px;height:1px;background:#bdbdbd;"></div>
<div style="left:23px;top:219px;width:990px;height:1px;background:#dcdcdc;"></div>
<div style="left:0px;top:231px;width:22px;height:1px;background:#bdbdbd;"></div>
<div style="left:23px;top:231px;width:990px;height:1px;background:#dcdcdc;"></div>
<div style="left:0px;top:243px;width:22px;height:1px;background:#bdbdbd;"></div>
<div style="left:23px;top:243px;width:990px;height:1px;background:#dcdcdc;"></div>
<div style="left:0px;top:255px;width:22px;height:1px;background:#bdbdbd;"></div>
<div style="left:23px;top:255px;width:990px;height:1px;background:#dcdcdc;"></div>
<div style="left:0px;top:267px;width:22px;height:1px;background:#bdbdbd;"></div>
<div style="left:23px;top:267px;width:990px;height:1px;background:#dcdcdc;"></div>
<div style="left:0px;top:279px;width:22px;height:1px;background:#bdbdbd;"></div>
<div style="left:23px;top:279px;width:990px;height:1px;background:#dcdcdc;"></div>
<div style="left:0px;top:291px;width:22px;height:1px;background:#bdbdbd;"></div>
<div style="left:23px;top:291px;width:990px;height:1px;background:#dcdcdc;"></div>
<div style="left:0px;top:304px;width:22px;height:1px;background:#bdbdbd;"></div>
<div style="left:23px;top:304px;width:990px;height:1px;background:#dcdcdc;"></div>
<div style="left:0px;top:316px;width:22px;height:1px;background:#bdbdbd;"></div>
<div style="left:23px;top:316px;width:990px;height:1px;background:#dcdcdc;"></div>
<div style="left:0px;top:328px;width:22px;height:1px;background:#bdbdbd;"></div>
<div style="left:23px;top:328px;width:990px;height:1px;background:#dcdcdc;"></div>
<div style="left:0px;top:340px;width:22px;height:1px;background:#bdbdbd;"></div>
<div style="left:23px;top:340px;width:990px;height:1px;background:#dcdcdc;"></div>
<div style="left:0px;top:352px;width:22px;height:1px;background:#bdbdbd;"></div>
<div style="left:23px;top:352px;width:990px;height:1px;background:#dcdcdc;"></div>
<div style="left:0px;top:364px;width:22px;height:1px;background:#bdbdbd;"></div>
<div style="left:23px;top:364px;width:990px;height:1px;background:#dcdcdc;"></div>
<div style="left:0px;top:376px;width:22px;height:1px;background:#bdbdbd;"></div>
<div style="left:23px;top:376px;width:990px;height:1px;background:#dcdcdc;"></div>
<div style="left:0px;top:388px;width:22px;height:1px;background:#bdbdbd;"></div>
<div style="left:23px;top:388px;width:990px;height:1px;background:#dcdcdc;"></div>
<div style="left:0px;top:400px;width:22px;height:1px;background:#bdbdbd;"></div>
<div style="left:23px;top:400px;width:990px;height:1px;background:#dcdcdc;"></div>
<div style="left:0px;top:412px;width:22px;height:1px;background:#bdbdbd;"></div>
<div style="left:23px;top:412px;width:990px;height:1px;background:#dcdcdc;"></div>
<div style="left:0px;top:424px;width:22px;height:1px;background:#bdbdbd;"></div>
<div style="left:23px;top:424px;width:990px;height:1px;background:#dcdcdc;"></div>
<div style="left:0px;top:436px;width:22px;height:1px;background:#bdbdbd;"></div>
<div style="left:23px;top:436px;width:990px;height:1px;background:#dcdcdc;"></div>
<div style="left:0px;top:448px;width:22px;height:1px;background:#bdbdbd;"></div>
<div style="left:23px;top:448px;width:990px;height:1px;background:#dcdcdc;"></div>
<div style="left:0px;top:460px;width:22px;height:1px;background:#bdbdbd;"></div>
<div style="left:23px;top:460px;width:990px;height:1px;background:#dcdcdc;"></div>
<div style="left:0px;top:472px;width:22px;height:1px;background:#bdbdbd;"></div>
<div style="left:23px;top:472px;width:990px;height:1px;background:#dcdcdc;"></div>
<div style="left:0px;top:484px;width:22px;height:1px;background:#bdbdbd;"></div>
<div style="left:23px;top:484px;width:990px;height:1px;background:#dcdcdc;"></div>
<div style="left:0px;top:496px;width:22px;height:1px;background:#bdbdbd;"></div>
<div style="left:23px;top:496px;width:990px;height:1px;background:#dcdcdc;"></div>
<div style="left:0px;top:508px;width:22px;height:1px;background:#bdbdbd;"></div>
<div style="left:23px;top:508px;width:990px;height:1px;background:#dcdcdc;"></div>
<div style="left:22px;top:89px;width:1px;height:427px;background:#a8a8a8;"></div>
<div style="left:119px;top:89px;width:1px;height:10px;background:#b8b8b8;"></div>
<div style="left:119px;top:100px;width:1px;height:416px;background:#dcdcdc;"></div>
<div style="left:191px;top:89px;width:1px;height:10px;background:#b8b8b8;"></div>
<div style="left:191px;top:100px;width:1px;height:416px;background:#dcdcdc;"></div>
<div style="left:277px;top:89px;width:1px;height:10px;background:#b8b8b8;"></div>
<div style="left:277px;top:100px;width:1px;height:416px;background:#dcdcdc;"></div>
<div style="left:356px;top:89px;width:1px;height:10px;background:#b8b8b8;"></div>
<div style="left:356px;top:100px;width:1px;height:416px;background:#dcdcdc;"></div>
<div style="left:433px;top:89px;width:1px;height:10px;background:#b8b8b8;"></div>
<div style="left:433px;top:100px;width:1px;height:416px;background:#dcdcdc;"></div>
<div style="left:485px;top:89px;width:1px;height:10px;background:#b8b8b8;"></div>
<div style="left:485px;top:100px;width:1px;height:416px;background:#dcdcdc;"></div>
<div style="left:583px;top:89px;width:1px;height:10px;background:#b8b8b8;"></div>
<div style="left:583px;top:100px;width:1px;height:416px;background:#dcdcdc;"></div>
<div style="left:705px;top:89px;width:1px;height:10px;background:#b8b8b8;"></div>
<div style="left:705px;top:100px;width:1px;height:416px;background:#dcdcdc;"></div>
<div style="left:828px;top:89px;width:1px;height:10px;background:#b8b8b8;"></div>
<div style="left:828px;top:100px;width:1px;height:416px;background:#dcdcdc;"></div>
<div style="left:916px;top:89px;width:1px;height:10px;background:#b8b8b8;"></div>
<div style="left:916px;top:100px;width:1px;height:416px;background:#dcdcdc;"></div>
<div style="left:968px;top:89px;width:1px;height:10px;background:#b8b8b8;"></div>
<div style="left:968px;top:100px;width:1px;height:416px;background:#dcdcdc;"></div>
<div style="left:1013px;top:89px;width:1px;height:10px;background:#b8b8b8;"></div>
<div style="left:1013px;top:100px;width:1px;height:416px;background:#dcdcdc;"></div>
<div class="t" style="left:-129.0px;width:400px;text-align:center;top:90px;font-size:9px;font-weight:bold;color:#555;transform:scaleX(1.0);transform-origin:50% 0;">A</div>
<div class="t" style="left:-44.5px;width:400px;text-align:center;top:90px;font-size:9px;font-weight:bold;color:#555;transform:scaleX(1.0);transform-origin:50% 0;">B</div>
<div class="t" style="left:34.5px;width:400px;text-align:center;top:90px;font-size:9px;font-weight:bold;color:#555;transform:scaleX(1.0);transform-origin:50% 0;">C</div>
<div class="t" style="left:117.0px;width:400px;text-align:center;top:90px;font-size:9px;font-weight:bold;color:#555;transform:scaleX(1.0);transform-origin:50% 0;">D</div>
<div class="t" style="left:195.0px;width:400px;text-align:center;top:90px;font-size:9px;font-weight:bold;color:#555;transform:scaleX(1.0);transform-origin:50% 0;">E</div>
<div class="t" style="left:259.5px;width:400px;text-align:center;top:90px;font-size:9px;font-weight:bold;color:#555;transform:scaleX(1.0);transform-origin:50% 0;">F</div>
<div class="t" style="left:334.5px;width:400px;text-align:center;top:90px;font-size:9px;font-weight:bold;color:#555;transform:scaleX(1.0);transform-origin:50% 0;">G</div>
<div class="t" style="left:444.5px;width:400px;text-align:center;top:90px;font-size:9px;font-weight:bold;color:#555;transform:scaleX(1.0);transform-origin:50% 0;">H</div>
<div class="t" style="left:567.0px;width:400px;text-align:center;top:90px;font-size:9px;font-weight:bold;color:#555;transform:scaleX(1.0);transform-origin:50% 0;">I</div>
<div class="t" style="left:672.5px;width:400px;text-align:center;top:90px;font-size:9px;font-weight:bold;color:#555;transform:scaleX(1.0);transform-origin:50% 0;">J</div>
<div class="t" style="left:742.5px;width:400px;text-align:center;top:90px;font-size:9px;font-weight:bold;color:#555;transform:scaleX(1.0);transform-origin:50% 0;">K</div>
<div class="t" style="left:791.0px;width:400px;text-align:center;top:90px;font-size:9px;font-weight:bold;color:#fff;transform:scaleX(1.0);transform-origin:50% 0;">L</div>
<div class="t" style="left:-189.5px;width:400px;text-align:center;top:100.4px;font-size:9.6px;font-weight:normal;color:#4e4e4e;transform:scaleX(0.95);transform-origin:50% 0;-webkit-text-stroke:0.25px #4e4e4e;">1</div>
<div class="t" style="left:-189.5px;width:400px;text-align:center;top:112.4px;font-size:9.6px;font-weight:normal;color:#fff;transform:scaleX(0.95);transform-origin:50% 0;-webkit-text-stroke:0.25px #fff;">2</div>
<div class="t" style="left:-189.5px;width:400px;text-align:center;top:124.4px;font-size:9.6px;font-weight:normal;color:#4e4e4e;transform:scaleX(0.95);transform-origin:50% 0;-webkit-text-stroke:0.25px #4e4e4e;">3</div>
<div class="t" style="left:-189.5px;width:400px;text-align:center;top:136.4px;font-size:9.6px;font-weight:normal;color:#4e4e4e;transform:scaleX(0.95);transform-origin:50% 0;-webkit-text-stroke:0.25px #4e4e4e;">4</div>
<div class="t" style="left:-189.5px;width:400px;text-align:center;top:148.4px;font-size:9.6px;font-weight:normal;color:#4e4e4e;transform:scaleX(0.95);transform-origin:50% 0;-webkit-text-stroke:0.25px #4e4e4e;">5</div>
<div class="t" style="left:-189.5px;width:400px;text-align:center;top:160.4px;font-size:9.6px;font-weight:normal;color:#4e4e4e;transform:scaleX(0.95);transform-origin:50% 0;-webkit-text-stroke:0.25px #4e4e4e;">6</div>
<div class="t" style="left:-189.5px;width:400px;text-align:center;top:172.4px;font-size:9.6px;font-weight:normal;color:#4e4e4e;transform:scaleX(0.95);transform-origin:50% 0;-webkit-text-stroke:0.25px #4e4e4e;">7</div>
<div class="t" style="left:-189.5px;width:400px;text-align:center;top:184.4px;font-size:9.6px;font-weight:normal;color:#4e4e4e;transform:scaleX(0.95);transform-origin:50% 0;-webkit-text-stroke:0.25px #4e4e4e;">8</div>
<div class="t" style="left:-189.5px;width:400px;text-align:center;top:196.4px;font-size:9.6px;font-weight:normal;color:#4e4e4e;transform:scaleX(0.95);transform-origin:50% 0;-webkit-text-stroke:0.25px #4e4e4e;">9</div>
<div class="t" style="left:-189.5px;width:400px;text-align:center;top:208.4px;font-size:9.6px;font-weight:normal;color:#4e4e4e;transform:scaleX(0.95);transform-origin:50% 0;-webkit-text-stroke:0.25px #4e4e4e;">10</div>
<div class="t" style="left:-189.5px;width:400px;text-align:center;top:220.4px;font-size:9.6px;font-weight:normal;color:#4e4e4e;transform:scaleX(0.95);transform-origin:50% 0;-webkit-text-stroke:0.25px #4e4e4e;">11</div>
<div class="t" style="left:-189.5px;width:400px;text-align:center;top:232.4px;font-size:9.6px;font-weight:normal;color:#4e4e4e;transform:scaleX(0.95);transform-origin:50% 0;-webkit-text-stroke:0.25px #4e4e4e;">12</div>
<div class="t" style="left:-189.5px;width:400px;text-align:center;top:244.4px;font-size:9.6px;font-weight:normal;color:#4e4e4e;transform:scaleX(0.95);transform-origin:50% 0;-webkit-text-stroke:0.25px #4e4e4e;">13</div>
<div class="t" style="left:-189.5px;width:400px;text-align:center;top:256.4px;font-size:9.6px;font-weight:normal;color:#4e4e4e;transform:scaleX(0.95);transform-origin:50% 0;-webkit-text-stroke:0.25px #4e4e4e;">14</div>
<div class="t" style="left:-189.5px;width:400px;text-align:center;top:268.4px;font-size:9.6px;font-weight:normal;color:#4e4e4e;transform:scaleX(0.95);transform-origin:50% 0;-webkit-text-stroke:0.25px #4e4e4e;">15</div>
<div class="t" style="left:-189.5px;width:400px;text-align:center;top:280.4px;font-size:9.6px;font-weight:normal;color:#4e4e4e;transform:scaleX(0.95);transform-origin:50% 0;-webkit-text-stroke:0.25px #4e4e4e;">16</div>
<div class="t" style="left:-189.5px;width:400px;text-align:center;top:292.4px;font-size:9.6px;font-weight:normal;color:#4e4e4e;transform:scaleX(0.95);transform-origin:50% 0;-webkit-text-stroke:0.25px #4e4e4e;">17</div>
<div class="t" style="left:-189.5px;width:400px;text-align:center;top:305.4px;font-size:9.6px;font-weight:normal;color:#4e4e4e;transform:scaleX(0.95);transform-origin:50% 0;-webkit-text-stroke:0.25px #4e4e4e;">18</div>
<div class="t" style="left:-189.5px;width:400px;text-align:center;top:317.4px;font-size:9.6px;font-weight:normal;color:#4e4e4e;transform:scaleX(0.95);transform-origin:50% 0;-webkit-text-stroke:0.25px #4e4e4e;">19</div>
<div class="t" style="left:-189.5px;width:400px;text-align:center;top:329.4px;font-size:9.6px;font-weight:normal;color:#4e4e4e;transform:scaleX(0.95);transform-origin:50% 0;-webkit-text-stroke:0.25px #4e4e4e;">20</div>
<div class="t" style="left:-189.5px;width:400px;text-align:center;top:341.4px;font-size:9.6px;font-weight:normal;color:#4e4e4e;transform:scaleX(0.95);transform-origin:50% 0;-webkit-text-stroke:0.25px #4e4e4e;">21</div>
<div class="t" style="left:-189.5px;width:400px;text-align:center;top:353.4px;font-size:9.6px;font-weight:normal;color:#4e4e4e;transform:scaleX(0.95);transform-origin:50% 0;-webkit-text-stroke:0.25px #4e4e4e;">22</div>
<div class="t" style="left:-189.5px;width:400px;text-align:center;top:365.4px;font-size:9.6px;font-weight:normal;color:#4e4e4e;transform:scaleX(0.95);transform-origin:50% 0;-webkit-text-stroke:0.25px #4e4e4e;">23</div>
<div class="t" style="left:-189.5px;width:400px;text-align:center;top:377.4px;font-size:9.6px;font-weight:normal;color:#4e4e4e;transform:scaleX(0.95);transform-origin:50% 0;-webkit-text-stroke:0.25px #4e4e4e;">24</div>
<div class="t" style="left:-189.5px;width:400px;text-align:center;top:389.4px;font-size:9.6px;font-weight:normal;color:#4e4e4e;transform:scaleX(0.95);transform-origin:50% 0;-webkit-text-stroke:0.25px #4e4e4e;">25</div>
<div class="t" style="left:-189.5px;width:400px;text-align:center;top:401.4px;font-size:9.6px;font-weight:normal;color:#4e4e4e;transform:scaleX(0.95);transform-origin:50% 0;-webkit-text-stroke:0.25px #4e4e4e;">26</div>
<div class="t" style="left:-189.5px;width:400px;text-align:center;top:413.4px;font-size:9.6px;font-weight:normal;color:#4e4e4e;transform:scaleX(0.95);transform-origin:50% 0;-webkit-text-stroke:0.25px #4e4e4e;">27</div>
<div class="t" style="left:-189.5px;width:400px;text-align:center;top:425.4px;font-size:9.6px;font-weight:normal;color:#4e4e4e;transform:scaleX(0.95);transform-origin:50% 0;-webkit-text-stroke:0.25px #4e4e4e;">28</div>
<div class="t" style="left:-189.5px;width:400px;text-align:center;top:437.4px;font-size:9.6px;font-weight:normal;color:#4e4e4e;transform:scaleX(0.95);transform-origin:50% 0;-webkit-text-stroke:0.25px #4e4e4e;">29</div>
<div class="t" style="left:-189.5px;width:400px;text-align:center;top:449.4px;font-size:9.6px;font-weight:normal;color:#4e4e4e;transform:scaleX(0.95);transform-origin:50% 0;-webkit-text-stroke:0.25px #4e4e4e;">30</div>
<div class="t" style="left:-189.5px;width:400px;text-align:center;top:461.4px;font-size:9.6px;font-weight:normal;color:#4e4e4e;transform:scaleX(0.95);transform-origin:50% 0;-webkit-text-stroke:0.25px #4e4e4e;">31</div>
<div class="t" style="left:-189.5px;width:400px;text-align:center;top:473.4px;font-size:9.6px;font-weight:normal;color:#4e4e4e;transform:scaleX(0.95);transform-origin:50% 0;-webkit-text-stroke:0.25px #4e4e4e;">32</div>
<div class="t" style="left:-189.5px;width:400px;text-align:center;top:485.4px;font-size:9.6px;font-weight:normal;color:#4e4e4e;transform:scaleX(0.95);transform-origin:50% 0;-webkit-text-stroke:0.25px #4e4e4e;">33</div>
<div class="t" style="left:-189.5px;width:400px;text-align:center;top:497.4px;font-size:9.6px;font-weight:normal;color:#4e4e4e;transform:scaleX(0.95);transform-origin:50% 0;-webkit-text-stroke:0.25px #4e4e4e;">34</div>
<div class="t" style="left:-189.5px;width:400px;text-align:center;top:509.4px;font-size:9.6px;font-weight:normal;color:#4e4e4e;transform:scaleX(0.95);transform-origin:50% 0;-webkit-text-stroke:0.25px #4e4e4e;">35</div>
<div style="left:119px;top:147px;width:73px;height:13px;background:#95b3d7;"></div>
<div style="left:119px;top:159px;width:73px;height:13px;background:#95b3d7;"></div>
<div style="left:191px;top:147px;width:87px;height:13px;background:#95b3d7;"></div>
<div style="left:191px;top:159px;width:87px;height:13px;background:#95b3d7;"></div>
<div style="left:277px;top:147px;width:80px;height:13px;background:#c6efce;"></div>
<div style="left:277px;top:159px;width:80px;height:13px;background:#95b3d7;"></div>
<div style="left:356px;top:147px;width:78px;height:13px;background:#95b3d7;"></div>
<div style="left:356px;top:159px;width:78px;height:13px;background:#c6efce;"></div>
<div style="left:433px;top:147px;width:53px;height:13px;background:#95b3d7;"></div>
<div style="left:433px;top:159px;width:53px;height:13px;background:#95b3d7;"></div>
<div style="left:485px;top:147px;width:99px;height:13px;background:#95b3d7;"></div>
<div style="left:485px;top:159px;width:99px;height:13px;background:#ffc7ce;"></div>
<div style="left:583px;top:147px;width:123px;height:13px;background:#ffeb9c;"></div>
<div style="left:583px;top:159px;width:123px;height:13px;background:#95b3d7;"></div>
<div style="left:705px;top:147px;width:124px;height:13px;background:#95b3d7;"></div>
<div style="left:705px;top:159px;width:124px;height:13px;background:#95b3d7;"></div>
<div style="left:828px;top:147px;width:89px;height:13px;background:#95b3d7;"></div>
<div style="left:828px;top:159px;width:89px;height:13px;background:#95b3d7;"></div>
<div style="left:916px;top:147px;width:53px;height:13px;background:#95b3d7;"></div>
<div style="left:916px;top:159px;width:53px;height:13px;background:#95b3d7;"></div>
<div style="left:968px;top:147px;width:45px;height:13px;background:#95b3d7;"></div>
<div style="left:968px;top:159px;width:45px;height:13px;background:#95b3d7;"></div>
<div style="left:356px;top:111px;width:78px;height:13px;background:#c6efce;"></div>
<div style="left:485px;top:111px;width:99px;height:13px;background:#ffc7ce;"></div>
<div style="left:0;top:0;width:1024px;height:546px;clip-path:inset(0 11px 30px 0)">
<div class="t" style="left:24.5px;top:102.1px;font-size:9.3px;font-weight:bold;color:#000;transform:scaleX(0.885);transform-origin:0 0;">Name</div>
<div class="t" style="left:121.5px;top:102.1px;font-size:9.3px;font-weight:bold;color:#000;transform:scaleX(0.885);transform-origin:0 0;">Website Review</div>
<div class="t" style="left:193.5px;top:102.1px;font-size:9.3px;font-weight:bold;color:#000;transform:scaleX(0.885);transform-origin:0 0;">Chapter Summaries</div>
<div class="t" style="left:279.5px;top:102.1px;font-size:9.3px;font-weight:bold;color:#000;transform:scaleX(0.885);transform-origin:0 0;">Discussion Boards</div>
<div class="t" style="left:358.5px;top:102.1px;font-size:9.3px;font-weight:bold;color:#000;transform:scaleX(0.885);transform-origin:0 0;">One Child Project</div>
<div class="t" style="left:435.5px;top:102.1px;font-size:9.3px;font-weight:bold;color:#000;transform:scaleX(0.885);transform-origin:0 0;">Exam One</div>
<div class="t" style="left:487.5px;top:102.1px;font-size:9.3px;font-weight:bold;color:#000;transform:scaleX(0.885);transform-origin:0 0;">Service Learning Hours</div>
<div class="t" style="left:585.5px;top:102.1px;font-size:9.3px;font-weight:bold;color:#000;transform:scaleX(0.885);transform-origin:0 0;">Service Learning Activity One</div>
<div class="t" style="left:707.5px;top:102.1px;font-size:9.3px;font-weight:bold;color:#000;transform:scaleX(0.885);transform-origin:0 0;">Service Learning Activity Two</div>
<div class="t" style="left:830.5px;top:102.1px;font-size:9.3px;font-weight:bold;color:#000;transform:scaleX(0.885);transform-origin:0 0;">Student Comparison</div>
<div class="t" style="left:918.5px;top:102.1px;font-size:9.3px;font-weight:bold;color:#000;transform:scaleX(0.885);transform-origin:0 0;">RTI Project</div>
<div class="t" style="left:970.5px;top:102.1px;font-size:9.3px;font-weight:bold;color:#000;transform:scaleX(0.885);transform-origin:0 0;">Exam Two</div>
<div class="t" style="left:24.5px;top:114.1px;font-size:9.3px;font-weight:normal;color:#000;transform:scaleX(0.915);transform-origin:0 0;-webkit-text-stroke:0.2px #000;">Sleeping Beauty</div>
<div class="t" style="right:835.2px;top:113.2px;font-size:9.5px;font-weight:normal;color:#000;transform:scaleX(0.93);transform-origin:100% 0;-webkit-text-stroke:0.2px #000;">21</div>
<div class="t" style="right:749.2px;top:113.2px;font-size:9.5px;font-weight:normal;color:#000;transform:scaleX(0.93);transform-origin:100% 0;-webkit-text-stroke:0.2px #000;">82</div>
<div class="t" style="right:670.2px;top:113.2px;font-size:9.5px;font-weight:normal;color:#000;transform:scaleX(0.93);transform-origin:100% 0;-webkit-text-stroke:0.2px #000;">44</div>
<div class="t" style="right:593.2px;top:113.2px;font-size:9.5px;font-weight:normal;color:#006100;transform:scaleX(0.93);transform-origin:100% 0;-webkit-text-stroke:0.2px #006100;">47</div>
<div class="t" style="right:541.2px;top:113.2px;font-size:9.5px;font-weight:normal;color:#000;transform:scaleX(0.93);transform-origin:100% 0;-webkit-text-stroke:0.2px #000;">81</div>
<div class="t" style="right:443.20000000000005px;top:113.2px;font-size:9.5px;font-weight:normal;color:#9c0006;transform:scaleX(0.93);transform-origin:100% 0;-webkit-text-stroke:0.2px #9c0006;">0</div>
<div class="t" style="right:321.20000000000005px;top:113.2px;font-size:9.5px;font-weight:normal;color:#000;transform:scaleX(0.93);transform-origin:100% 0;-webkit-text-stroke:0.2px #000;">24</div>
<div class="t" style="right:198.20000000000005px;top:113.2px;font-size:9.5px;font-weight:normal;color:#000;transform:scaleX(0.93);transform-origin:100% 0;-webkit-text-stroke:0.2px #000;">25</div>
<div class="t" style="right:110.20000000000005px;top:113.2px;font-size:9.5px;font-weight:normal;color:#000;transform:scaleX(0.93);transform-origin:100% 0;-webkit-text-stroke:0.2px #000;">42</div>
<div class="t" style="right:58.200000000000045px;top:113.2px;font-size:9.5px;font-weight:normal;color:#000;transform:scaleX(0.93);transform-origin:100% 0;-webkit-text-stroke:0.2px #000;">33</div>
<div class="t" style="right:5px;top:113.2px;font-size:9.5px;font-weight:normal;color:#000;transform:scaleX(0.93);transform-origin:100% 0;-webkit-text-stroke:0.2px #000;">80</div>
<div class="t" style="left:24.5px;top:126.1px;font-size:9.3px;font-weight:bold;color:#000;transform:scaleX(0.885);transform-origin:0 0;">Points Possible</div>
<div class="t" style="right:835.2px;top:125.2px;font-size:9.5px;font-weight:normal;color:#000;transform:scaleX(0.93);transform-origin:100% 0;-webkit-text-stroke:0.2px #000;">25</div>
<div class="t" style="right:749.2px;top:125.2px;font-size:9.5px;font-weight:normal;color:#000;transform:scaleX(0.93);transform-origin:100% 0;-webkit-text-stroke:0.2px #000;">100</div>
<div class="t" style="right:670.2px;top:125.2px;font-size:9.5px;font-weight:normal;color:#000;transform:scaleX(0.93);transform-origin:100% 0;-webkit-text-stroke:0.2px #000;">50</div>
<div class="t" style="right:593.2px;top:125.2px;font-size:9.5px;font-weight:normal;color:#000;transform:scaleX(0.93);transform-origin:100% 0;-webkit-text-stroke:0.2px #000;">50</div>
<div class="t" style="right:541.2px;top:125.2px;font-size:9.5px;font-weight:normal;color:#000;transform:scaleX(0.93);transform-origin:100% 0;-webkit-text-stroke:0.2px #000;">100</div>
<div class="t" style="right:443.20000000000005px;top:125.2px;font-size:9.5px;font-weight:normal;color:#000;transform:scaleX(0.93);transform-origin:100% 0;-webkit-text-stroke:0.2px #000;">40</div>
<div class="t" style="right:321.20000000000005px;top:125.2px;font-size:9.5px;font-weight:normal;color:#000;transform:scaleX(0.93);transform-origin:100% 0;-webkit-text-stroke:0.2px #000;">30</div>
<div class="t" style="right:198.20000000000005px;top:125.2px;font-size:9.5px;font-weight:normal;color:#000;transform:scaleX(0.93);transform-origin:100% 0;-webkit-text-stroke:0.2px #000;">30</div>
<div class="t" style="right:110.20000000000005px;top:125.2px;font-size:9.5px;font-weight:normal;color:#000;transform:scaleX(0.93);transform-origin:100% 0;-webkit-text-stroke:0.2px #000;">50</div>
<div class="t" style="right:58.200000000000045px;top:125.2px;font-size:9.5px;font-weight:normal;color:#000;transform:scaleX(0.93);transform-origin:100% 0;-webkit-text-stroke:0.2px #000;">40</div>
<div class="t" style="right:5px;top:125.2px;font-size:9.5px;font-weight:normal;color:#000;transform:scaleX(0.93);transform-origin:100% 0;-webkit-text-stroke:0.2px #000;">100</div>
<div class="t" style="left:24.5px;top:138.1px;font-size:9.3px;font-weight:bold;color:#000;transform:scaleX(0.885);transform-origin:0 0;">Class Average</div>
<div class="t" style="right:835.2px;top:137.2px;font-size:9.5px;font-weight:normal;color:#000;transform:scaleX(0.93);transform-origin:100% 0;-webkit-text-stroke:0.2px #000;">22.4</div>
<div class="t" style="right:749.2px;top:137.2px;font-size:9.5px;font-weight:normal;color:#000;transform:scaleX(0.93);transform-origin:100% 0;-webkit-text-stroke:0.2px #000;">87.2</div>
<div class="t" style="right:670.2px;top:137.2px;font-size:9.5px;font-weight:normal;color:#000;transform:scaleX(0.93);transform-origin:100% 0;-webkit-text-stroke:0.2px #000;">45</div>
<div class="t" style="right:593.2px;top:137.2px;font-size:9.5px;font-weight:normal;color:#000;transform:scaleX(0.93);transform-origin:100% 0;-webkit-text-stroke:0.2px #000;">44.4</div>
<div class="t" style="right:541.2px;top:137.2px;font-size:9.5px;font-weight:normal;color:#000;transform:scaleX(0.93);transform-origin:100% 0;-webkit-text-stroke:0.2px #000;">84.6</div>
<div class="t" style="right:443.20000000000005px;top:137.2px;font-size:9.5px;font-weight:normal;color:#000;transform:scaleX(0.93);transform-origin:100% 0;-webkit-text-stroke:0.2px #000;">35.6</div>
<div class="t" style="right:321.20000000000005px;top:137.2px;font-size:9.5px;font-weight:normal;color:#000;transform:scaleX(0.93);transform-origin:100% 0;-webkit-text-stroke:0.2px #000;">23.9</div>
<div class="t" style="right:198.20000000000005px;top:137.2px;font-size:9.5px;font-weight:normal;color:#000;transform:scaleX(0.93);transform-origin:100% 0;-webkit-text-stroke:0.2px #000;">24.6</div>
<div class="t" style="right:110.20000000000005px;top:137.2px;font-size:9.5px;font-weight:normal;color:#000;transform:scaleX(0.93);transform-origin:100% 0;-webkit-text-stroke:0.2px #000;">44.9</div>
<div class="t" style="right:58.200000000000045px;top:137.2px;font-size:9.5px;font-weight:normal;color:#000;transform:scaleX(0.93);transform-origin:100% 0;-webkit-text-stroke:0.2px #000;">35.9</div>
<div class="t" style="right:5px;top:137.2px;font-size:9.5px;font-weight:normal;color:#000;transform:scaleX(0.93);transform-origin:100% 0;-webkit-text-stroke:0.2px #000;">85.5</div>
<div class="t" style="left:24.5px;top:150.1px;font-size:9.3px;font-weight:bold;color:#000;transform:scaleX(0.885);transform-origin:0 0;">Class Average Percent</div>
<div class="t" style="right:835.2px;top:149.2px;font-size:9.5px;font-weight:normal;color:#3d5e94;transform:scaleX(0.93);transform-origin:100% 0;-webkit-text-stroke:0.2px #3d5e94;">89.6</div>
<div class="t" style="right:749.2px;top:149.2px;font-size:9.5px;font-weight:normal;color:#3d5e94;transform:scaleX(0.93);transform-origin:100% 0;-webkit-text-stroke:0.2px #3d5e94;">87.2</div>
<div class="t" style="right:670.2px;top:149.2px;font-size:9.5px;font-weight:normal;color:#006100;transform:scaleX(0.93);transform-origin:100% 0;-webkit-text-stroke:0.2px #006100;">90</div>
<div class="t" style="right:593.2px;top:149.2px;font-size:9.5px;font-weight:normal;color:#3d5e94;transform:scaleX(0.93);transform-origin:100% 0;-webkit-text-stroke:0.2px #3d5e94;">88.8</div>
<div class="t" style="right:541.2px;top:149.2px;font-size:9.5px;font-weight:normal;color:#3d5e94;transform:scaleX(0.93);transform-origin:100% 0;-webkit-text-stroke:0.2px #3d5e94;">84.6</div>
<div class="t" style="right:443.20000000000005px;top:149.2px;font-size:9.5px;font-weight:normal;color:#3d5e94;transform:scaleX(0.93);transform-origin:100% 0;-webkit-text-stroke:0.2px #3d5e94;">89</div>
<div class="t" style="right:321.20000000000005px;top:149.2px;font-size:9.5px;font-weight:normal;color:#9c6500;transform:scaleX(0.93);transform-origin:100% 0;-webkit-text-stroke:0.2px #9c6500;">79.67</div>
<div class="t" style="right:198.20000000000005px;top:149.2px;font-size:9.5px;font-weight:normal;color:#3d5e94;transform:scaleX(0.93);transform-origin:100% 0;-webkit-text-stroke:0.2px #3d5e94;">82</div>
<div class="t" style="right:110.20000000000005px;top:149.2px;font-size:9.5px;font-weight:normal;color:#3d5e94;transform:scaleX(0.93);transform-origin:100% 0;-webkit-text-stroke:0.2px #3d5e94;">89.8</div>
<div class="t" style="right:58.200000000000045px;top:149.2px;font-size:9.5px;font-weight:normal;color:#3d5e94;transform:scaleX(0.93);transform-origin:100% 0;-webkit-text-stroke:0.2px #3d5e94;">89.75</div>
<div class="t" style="right:5px;top:149.2px;font-size:9.5px;font-weight:normal;color:#3d5e94;transform:scaleX(0.93);transform-origin:100% 0;-webkit-text-stroke:0.2px #3d5e94;">85.5</div>
<div class="t" style="left:24.5px;top:162.1px;font-size:9.3px;font-weight:bold;color:#000;transform:scaleX(0.885);transform-origin:0 0;">Student Percent</div>
<div class="t" style="right:835.2px;top:161.2px;font-size:9.5px;font-weight:normal;color:#3d5e94;transform:scaleX(0.93);transform-origin:100% 0;-webkit-text-stroke:0.2px #3d5e94;">84</div>
<div class="t" style="right:749.2px;top:161.2px;font-size:9.5px;font-weight:normal;color:#3d5e94;transform:scaleX(0.93);transform-origin:100% 0;-webkit-text-stroke:0.2px #3d5e94;">82</div>
<div class="t" style="right:670.2px;top:161.2px;font-size:9.5px;font-weight:normal;color:#3d5e94;transform:scaleX(0.93);transform-origin:100% 0;-webkit-text-stroke:0.2px #3d5e94;">88</div>
<div class="t" style="right:593.2px;top:161.2px;font-size:9.5px;font-weight:normal;color:#006100;transform:scaleX(0.93);transform-origin:100% 0;-webkit-text-stroke:0.2px #006100;">94</div>
<div class="t" style="right:541.2px;top:161.2px;font-size:9.5px;font-weight:normal;color:#3d5e94;transform:scaleX(0.93);transform-origin:100% 0;-webkit-text-stroke:0.2px #3d5e94;">81</div>
<div class="t" style="right:443.20000000000005px;top:161.2px;font-size:9.5px;font-weight:normal;color:#9c0006;transform:scaleX(0.93);transform-origin:100% 0;-webkit-text-stroke:0.2px #9c0006;">0</div>
<div class="t" style="right:321.20000000000005px;top:161.2px;font-size:9.5px;font-weight:normal;color:#3d5e94;transform:scaleX(0.93);transform-origin:100% 0;-webkit-text-stroke:0.2px #3d5e94;">80</div>
<div class="t" style="right:198.20000000000005px;top:161.2px;font-size:9.5px;font-weight:normal;color:#3d5e94;transform:scaleX(0.93);transform-origin:100% 0;-webkit-text-stroke:0.2px #3d5e94;">83.33</div>
<div class="t" style="right:110.20000000000005px;top:161.2px;font-size:9.5px;font-weight:normal;color:#3d5e94;transform:scaleX(0.93);transform-origin:100% 0;-webkit-text-stroke:0.2px #3d5e94;">84</div>
<div class="t" style="right:58.200000000000045px;top:161.2px;font-size:9.5px;font-weight:normal;color:#3d5e94;transform:scaleX(0.93);transform-origin:100% 0;-webkit-text-stroke:0.2px #3d5e94;">82.5</div>
<div class="t" style="right:5px;top:161.2px;font-size:9.5px;font-weight:normal;color:#3d5e94;transform:scaleX(0.93);transform-origin:100% 0;-webkit-text-stroke:0.2px #3d5e94;">80</div>
</div>
<svg style="position:absolute;left:0;top:0" width="1013" height="546"><rect x="969.1" y="112.1" width="60" height="11.7" fill="none" stroke="#2a62d3" stroke-width="1.5"/></svg>
<div style="left:1013px;top:89px;width:11px;height:427px;background:#f8f8f8;border-left:1px solid #c4c4c4;"></div>
<div style="left:1014px;top:89px;width:10px;height:10px;background:#f4f4f4;"></div>
<svg style="position:absolute;left:1015px;top:91px" width="9" height="6"><path d="M1 1.5h8M1 4h8" stroke="#8d8d8d" stroke-width="0.9"/></svg>
<div style="left:1018px;top:101px;width:8px;height:222px;background:#c1c1c1;border-radius:4px;"></div>
<svg style="position:absolute;left:0;top:0" width="1024" height="546" viewBox="0 0 1024 546"><rect x="151.5" y="212.5" width="378" height="235" fill="#fff" stroke="#b4b4b4" stroke-width="1.2"/><path d="M196 339.90 H408" stroke="#9c9c9c" stroke-width="1"/><text x="191.5" y="343.00" font-family="Liberation Sans" font-size="7.6" fill="#333" text-anchor="end" transform="scale(1,1)">0</text><path d="M196 330.84 H408" stroke="#9c9c9c" stroke-width="1"/><text x="191.5" y="333.94" font-family="Liberation Sans" font-size="7.6" fill="#333" text-anchor="end" transform="scale(1,1)">10</text><path d="M196 321.78 H408" stroke="#9c9c9c" stroke-width="1"/><text x="191.5" y="324.88" font-family="Liberation Sans" font-size="7.6" fill="#333" text-anchor="end" transform="scale(1,1)">20</text><path d="M196 312.72 H408" stroke="#9c9c9c" stroke-width="1"/><text x="191.5" y="315.82" font-family="Liberation Sans" font-size="7.6" fill="#333" text-anchor="end" transform="scale(1,1)">30</text><path d="M196 303.66 H408" stroke="#9c9c9c" stroke-width="1"/><text x="191.5" y="306.76" font-family="Liberation Sans" font-size="7.6" fill="#333" text-anchor="end" transform="scale(1,1)">40</text><path d="M196 294.60 H408" stroke="#9c9c9c" stroke-width="1"/><text x="191.5" y="297.70" font-family="Liberation Sans" font-size="7.6" fill="#333" text-anchor="end" transform="scale(1,1)">50</text><path d="M196 285.54 H408" stroke="#9c9c9c" stroke-width="1"/><text x="191.5" y="288.64" font-family="Liberation Sans" font-size="7.6" fill="#333" text-anchor="end" transform="scale(1,1)">60</text><path d="M196 276.48 H408" stroke="#9c9c9c" stroke-width="1"/><text x="191.5" y="279.58" font-family="Liberation Sans" font-size="7.6" fill="#333" text-anchor="end" transform="scale(1,1)">70</text><path d="M196 267.42 H408" stroke="#9c9c9c" stroke-width="1"/><text x="191.5" y="270.52" font-family="Liberation Sans" font-size="7.6" fill="#333" text-anchor="end" transform="scale(1,1)">80</text><path d="M196 258.36 H408" stroke="#9c9c9c" stroke-width="1"/><text x="191.5" y="261.46" font-family="Liberation Sans" font-size="7.6" fill="#333" text-anchor="end" transform="scale(1,1)">90</text><path d="M196 249.30 H408" stroke="#9c9c9c" stroke-width="1"/><text x="191.5" y="252.40" font-family="Liberation Sans" font-size="7.6" fill="#333" text-anchor="end" transform="scale(1,1)">100</text><path d="M199 249.3 V342.9" stroke="#8c8c8c" stroke-width="0.9"/><path d="M199.00 339.9 V342.9" stroke="#8c8c8c" stroke-width="0.9"/><path d="M218.00 339.9 V342.9" stroke="#8c8c8c" stroke-width="0.9"/><path d="M237.00 339.9 V342.9" stroke="#8c8c8c" stroke-width="0.9"/><path d="M256.00 339.9 V342.9" stroke="#8c8c8c" stroke-width="0.9"/><path d="M275.00 339.9 V342.9" stroke="#8c8c8c" stroke-width="0.9"/><path d="M294.00 339.9 V342.9" stroke="#8c8c8c" stroke-width="0.9"/><path d="M313.00 339.9 V342.9" stroke="#8c8c8c" stroke-width="0.9"/><path d="M332.00 339.9 V342.9" stroke="#8c8c8c" stroke-width="0.9"/><path d="M351.00 339.9 V342.9" stroke="#8c8c8c" stroke-width="0.9"/><path d="M370.00 339.9 V342.9" stroke="#8c8c8c" stroke-width="0.9"/><path d="M389.00 339.9 V342.9" stroke="#8c8c8c" stroke-width="0.9"/><path d="M408.00 339.9 V342.9" stroke="#8c8c8c" stroke-width="0.9"/><polyline points="208.50,258.72 227.50,260.90 246.50,258.36 265.50,259.45 284.50,263.25 303.50,259.27 322.50,267.72 341.50,265.61 360.50,258.54 379.50,258.59 398.50,262.44" fill="none" stroke="#5b92d4" stroke-width="3" stroke-linejoin="round"/><path d="M208.50 254.72 L212.50 258.72 L208.50 262.72 L204.50 258.72 Z" fill="#6fa3e3" stroke="#4f82c2" stroke-width="0.6"/><path d="M227.50 256.90 L231.50 260.90 L227.50 264.90 L223.50 260.90 Z" fill="#6fa3e3" stroke="#4f82c2" stroke-width="0.6"/><path d="M246.50 254.36 L250.50 258.36 L246.50 262.36 L242.50 258.36 Z" fill="#6fa3e3" stroke="#4f82c2" stroke-width="0.6"/><path d="M265.50 255.45 L269.50 259.45 L265.50 263.45 L261.50 259.45 Z" fill="#6fa3e3" stroke="#4f82c2" stroke-width="0.6"/><path d="M284.50 259.25 L288.50 263.25 L284.50 267.25 L280.50 263.25 Z" fill="#6fa3e3" stroke="#4f82c2" stroke-width="0.6"/><path d="M303.50 255.27 L307.50 259.27 L303.50 263.27 L299.50 259.27 Z" fill="#6fa3e3" stroke="#4f82c2" stroke-width="0.6"/><path d="M322.50 263.72 L326.50 267.72 L322.50 271.72 L318.50 267.72 Z" fill="#6fa3e3" stroke="#4f82c2" stroke-width="0.6"/><path d="M341.50 261.61 L345.50 265.61 L341.50 269.61 L337.50 265.61 Z" fill="#6fa3e3" stroke="#4f82c2" stroke-width="0.6"/><path d="M360.50 254.54 L364.50 258.54 L360.50 262.54 L356.50 258.54 Z" fill="#6fa3e3" stroke="#4f82c2" stroke-width="0.6"/><path d="M379.50 254.59 L383.50 258.59 L379.50 262.59 L375.50 258.59 Z" fill="#6fa3e3" stroke="#4f82c2" stroke-width="0.6"/><path d="M398.50 258.44 L402.50 262.44 L398.50 266.44 L394.50 262.44 Z" fill="#6fa3e3" stroke="#4f82c2" stroke-width="0.6"/><polyline points="208.50,263.80 227.50,265.61 246.50,260.17 265.50,254.74 284.50,266.51 303.50,339.90 322.50,267.42 341.50,264.40 360.50,263.80 379.50,265.15 398.50,267.42" fill="none" stroke="#cd5652" stroke-width="2.8" stroke-linejoin="round"/><rect x="204.70" y="260.00" width="7.6" height="7.6" fill="#e8807c" stroke="#c0504d" stroke-width="0.8"/><rect x="223.70" y="261.81" width="7.6" height="7.6" fill="#e8807c" stroke="#c0504d" stroke-width="0.8"/><rect x="242.70" y="256.37" width="7.6" height="7.6" fill="#e8807c" stroke="#c0504d" stroke-width="0.8"/><rect x="261.70" y="250.94" width="7.6" height="7.6" fill="#e8807c" stroke="#c0504d" stroke-width="0.8"/><rect x="280.70" y="262.71" width="7.6" height="7.6" fill="#e8807c" stroke="#c0504d" stroke-width="0.8"/><rect x="299.70" y="336.10" width="7.6" height="7.6" fill="#e8807c" stroke="#c0504d" stroke-width="0.8"/><rect x="318.70" y="263.62" width="7.6" height="7.6" fill="#e8807c" stroke="#c0504d" stroke-width="0.8"/><rect x="337.70" y="260.60" width="7.6" height="7.6" fill="#e8807c" stroke="#c0504d" stroke-width="0.8"/><rect x="356.70" y="260.00" width="7.6" height="7.6" fill="#e8807c" stroke="#c0504d" stroke-width="0.8"/><rect x="375.70" y="261.35" width="7.6" height="7.6" fill="#e8807c" stroke="#c0504d" stroke-width="0.8"/><rect x="394.70" y="263.62" width="7.6" height="7.6" fill="#e8807c" stroke="#c0504d" stroke-width="0.8"/><text x="210.00" y="351.90" font-family="Liberation Sans" font-size="7" fill="#333" text-anchor="end" transform="rotate(-45 210.00 351.90)" textLength="" >Website Review</text><text x="229.00" y="351.90" font-family="Liberation Sans" font-size="7" fill="#333" text-anchor="end" transform="rotate(-45 229.00 351.90)" textLength="" >Chapter Summaries</text><text x="248.00" y="351.90" font-family="Liberation Sans" font-size="7" fill="#333" text-anchor="end" transform="rotate(-45 248.00 351.90)" textLength="" >Discussion Boards</text><text x="267.00" y="351.90" font-family="Liberation Sans" font-size="7" fill="#333" text-anchor="end" transform="rotate(-45 267.00 351.90)" textLength="" >One Child Project</text><text x="286.00" y="351.90" font-family="Liberation Sans" font-size="7" fill="#333" text-anchor="end" transform="rotate(-45 286.00 351.90)" textLength="" >Exam One</text><text x="305.00" y="351.90" font-family="Liberation Sans" font-size="7" fill="#333" text-anchor="end" transform="rotate(-45 305.00 351.90)" textLength="" >Service Learning Hours</text><text x="324.00" y="351.90" font-family="Liberation Sans" font-size="7" fill="#333" text-anchor="end" transform="rotate(-45 324.00 351.90)" textLength="" >Service Learning Activity One</text><text x="343.00" y="351.90" font-family="Liberation Sans" font-size="7" fill="#333" text-anchor="end" transform="rotate(-45 343.00 351.90)" textLength="" >Service Learning Activity Two</text><text x="362.00" y="351.90" font-family="Liberation Sans" font-size="7" fill="#333" text-anchor="end" transform="rotate(-45 362.00 351.90)" textLength="" >Student Comparison</text><text x="381.00" y="351.90" font-family="Liberation Sans" font-size="7" fill="#333" text-anchor="end" transform="rotate(-45 381.00 351.90)" textLength="" >RTI Project</text><text x="400.00" y="351.90" font-family="Liberation Sans" font-size="7" fill="#333" text-anchor="end" transform="rotate(-45 400.00 351.90)" textLength="" >Exam Two</text><text x="310" y="235.5" font-family="Liberation Sans" font-weight="bold" font-size="12.2" fill="#1a1a1a" text-anchor="middle">Sleeping Beauty vs. Class</text><text x="173.5" y="294.5" font-family="Liberation Sans" font-weight="bold" font-size="10" fill="#1a1a1a" text-anchor="middle" transform="rotate(-90 173.5 294.5)">Percentage</text><text x="303" y="433.5" font-family="Liberation Sans" font-weight="bold" font-size="9.6" fill="#1a1a1a" text-anchor="middle">Assignment</text><path d="M421 335.7 H437.5" stroke="#5b92d4" stroke-width="2.6"/><path d="M429 333.4 L431.3 335.7 L429 338 L426.7 335.7 Z" fill="#8db8ec"/><text x="438.5" y="338.4" font-family="Liberation Sans" font-size="7.3" fill="#2e2e2e">Class Average Percent</text><path d="M421 351.4 H437.5" stroke="#cd5652" stroke-width="2.6"/><rect x="427" y="349.4" width="4" height="4" fill="#e8807c" stroke="#c0504d" stroke-width="0.5"/><text x="438.5" y="354.1" font-family="Liberation Sans" font-size="7.3" fill="#2e2e2e">Sleeping Beauty Percent</text></svg>
<div style="left:0px;top:516px;width:1024px;height:1px;background:#b0b0b0;"></div>
<div style="left:0px;top:517px;width:1024px;height:13px;background:linear-gradient(#e9e9e9,#d9d9d9);"></div>
<div style="left:0px;top:517px;width:52px;height:26px;background:linear-gradient(#f4f4f4,#e6e6e6);border-right:1px solid #c4c4c4;"></div>
<div style="left:3px;top:520px;width:47px;height:20px;background:linear-gradient(#fafafa,#e4e4e4);border:1px solid #a6a6a6;border-radius:4px;"></div>
<div style="left:4px;top:521px;width:22px;height:18px;background:linear-gradient(#5e5e5e,#6e6e6e);border-radius:3px 0 0 3px;"></div>
<svg style="position:absolute;left:0;top:0" width="52" height="546"><rect x="9.8" y="525.4" width="10.4" height="9.2" fill="#3a86d6" stroke="#8cc4f2" stroke-width="0.8"/><path d="M9.8 528.4h10.4M9.8 531.5h10.4M12.4 525.4v9.2M15 525.4v9.2M17.6 525.4v9.2" stroke="#a9d3f7" stroke-width="0.5"/><rect x="30.2" y="525.4" width="6.4" height="9.2" rx="0.8" fill="#e8e8e8" stroke="#555" stroke-width="0.9"/><rect x="38.4" y="525.4" width="6.4" height="9.2" rx="0.8" fill="#e8e8e8" stroke="#555" stroke-width="0.9"/><path d="M33.4 525.4v9.2M41.6 525.4v9.2M30.2 528.5h6.4M30.2 531.5h6.4M38.4 528.5h6.4M38.4 531.5h6.4" stroke="#777" stroke-width="0.5"/></svg>
<div style="left:53px;top:517px;width:53px;height:12px;background:linear-gradient(#f6f6f6,#e2e2e2);"></div>
<svg style="position:absolute;left:0;top:0" width="110" height="546"><path d="M59.6 519.4v5.8" stroke="#8d8d8d" stroke-width="1"/><path d="M65.6 519.6 L60.6 522.3 L65.6 525 Z" fill="#8d8d8d"/><path d="M75.4 519.6 L70.6 522.3 L75.4 525 Z" fill="#8d8d8d"/><path d="M83.2 519.6 L88 522.3 L83.2 525 Z" fill="#3c3c3c"/><path d="M93 519.6 L98 522.3 L93 525 Z" fill="#3c3c3c"/><path d="M99.4 519.4v5.8" stroke="#3c3c3c" stroke-width="1"/></svg>
<div style="left:106px;top:517px;width:10px;height:12px;background:#8fa2b8;"></div>
<div style="left:116px;top:516px;width:57px;height:13px;background:linear-gradient(#e6e6e6,#d6d6d6);"></div>
<svg style="position:absolute;left:166px;top:516px" width="9" height="13"><path d="M7 0 V7" stroke="#7c7c7c" stroke-width="0.9"/><path d="M0.5 12.6 Q5 11 6.6 6.5 L7.2 6.5 Q7.6 11 8.5 12.6 Z" fill="#6a7d96"/></svg>
<div class="t" style="left:-55.5px;width:400px;text-align:center;top:517.3px;font-size:9.5px;font-weight:normal;color:#111;transform:scaleX(0.93);transform-origin:50% 0;">Gradebook</div>
<div style="left:173px;top:516px;width:50px;height:13px;background:linear-gradient(#e6e6e6,#d6d6d6);"></div>
<svg style="position:absolute;left:216px;top:516px" width="9" height="13"><path d="M7 0 V7" stroke="#7c7c7c" stroke-width="0.9"/><path d="M0.5 12.6 Q5 11 6.6 6.5 L7.2 6.5 Q7.6 11 8.5 12.6 Z" fill="#6a7d96"/></svg>
<div class="t" style="left:-2.0px;width:400px;text-align:center;top:517.3px;font-size:9.5px;font-weight:normal;color:#111;transform:scaleX(0.93);transform-origin:50% 0;">Rapunzel</div>
<div style="left:223px;top:516px;width:41px;height:13px;background:linear-gradient(#e6e6e6,#d6d6d6);"></div>
<svg style="position:absolute;left:257px;top:516px" width="9" height="13"><path d="M7 0 V7" stroke="#7c7c7c" stroke-width="0.9"/><path d="M0.5 12.6 Q5 11 6.6 6.5 L7.2 6.5 Q7.6 11 8.5 12.6 Z" fill="#6a7d96"/></svg>
<div class="t" style="left:43.5px;width:400px;text-align:center;top:517.3px;font-size:9.5px;font-weight:normal;color:#111;transform:scaleX(0.93);transform-origin:50% 0;">Ariel</div>
<div style="left:264px;top:516px;width:53px;height:13px;background:linear-gradient(#e6e6e6,#d6d6d6);"></div>
<svg style="position:absolute;left:310px;top:516px" width="9" height="13"><path d="M7 0 V7" stroke="#7c7c7c" stroke-width="0.9"/><path d="M0.5 12.6 Q5 11 6.6 6.5 L7.2 6.5 Q7.6 11 8.5 12.6 Z" fill="#6a7d96"/></svg>
<div class="t" style="left:90.5px;width:400px;text-align:center;top:517.3px;font-size:9.5px;font-weight:normal;color:#111;transform:scaleX(0.93);transform-origin:50% 0;">Cinderella</div>
<div style="left:317px;top:516px;width:41px;height:13px;background:linear-gradient(#e6e6e6,#d6d6d6);"></div>
<svg style="position:absolute;left:351px;top:516px" width="9" height="13"><path d="M7 0 V7" stroke="#7c7c7c" stroke-width="0.9"/><path d="M0.5 12.6 Q5 11 6.6 6.5 L7.2 6.5 Q7.6 11 8.5 12.6 Z" fill="#6a7d96"/></svg>
<div class="t" style="left:137.5px;width:400px;text-align:center;top:517.3px;font-size:9.5px;font-weight:normal;color:#111;transform:scaleX(0.93);transform-origin:50% 0;">Mulan</div>
<div style="left:358px;top:516px;width:78px;height:13px;background:linear-gradient(#f7f7f7,#f2f2f2);"></div>
<svg style="position:absolute;left:429px;top:516px" width="9" height="13"><path d="M7 0 V7" stroke="#7c7c7c" stroke-width="0.9"/><path d="M0.5 12.6 Q5 11 6.6 6.5 L7.2 6.5 Q7.6 11 8.5 12.6 Z" fill="#6a7d96"/></svg>
<div class="t" style="left:197.0px;width:400px;text-align:center;top:517.3px;font-size:9.5px;font-weight:bold;color:#111;transform:scaleX(0.93);transform-origin:50% 0;">Sleeping Beauty</div>
<div style="left:436px;top:516px;width:45px;height:13px;background:linear-gradient(#e6e6e6,#d6d6d6);"></div>
<svg style="position:absolute;left:474px;top:516px" width="9" height="13"><path d="M7 0 V7" stroke="#7c7c7c" stroke-width="0.9"/><path d="M0.5 12.6 Q5 11 6.6 6.5 L7.2 6.5 Q7.6 11 8.5 12.6 Z" fill="#6a7d96"/></svg>
<div class="t" style="left:258.5px;width:400px;text-align:center;top:517.3px;font-size:9.5px;font-weight:normal;color:#111;transform:scaleX(0.93);transform-origin:50% 0;">Jasmine</div>
<div style="left:481px;top:516px;width:41px;height:13px;background:linear-gradient(#e6e6e6,#d6d6d6);"></div>
<svg style="position:absolute;left:515px;top:516px" width="9" height="13"><path d="M7 0 V7" stroke="#7c7c7c" stroke-width="0.9"/><path d="M0.5 12.6 Q5 11 6.6 6.5 L7.2 6.5 Q7.6 11 8.5 12.6 Z" fill="#6a7d96"/></svg>
<div class="t" style="left:301.5px;width:400px;text-align:center;top:517.3px;font-size:9.5px;font-weight:normal;color:#111;transform:scaleX(0.93);transform-origin:50% 0;">Belle</div>
<div style="left:522px;top:516px;width:21px;height:13px;background:linear-gradient(#e6e6e6,#d6d6d6);"></div>
<svg style="position:absolute;left:536px;top:516px" width="9" height="13"><path d="M7 0 V7" stroke="#7c7c7c" stroke-width="0.9"/><path d="M0.5 12.6 Q5 11 6.6 6.5 L7.2 6.5 Q7.6 11 8.5 12.6 Z" fill="#6a7d96"/></svg>
<div class="t" style="left:526px;top:517.3px;font-size:9.5px;font-weight:normal;color:#222;transform:scaleX(1.0);transform-origin:0 0;">Po</div>
<div style="left:538px;top:517px;width:5px;height:12px;background:linear-gradient(90deg,#cfcfcf,#bdbdbd);"></div>
<div style="left:543px;top:517px;width:471px;height:12px;background:linear-gradient(#f0f0f0,#f8f8f8);border-top:1px solid #d0d0d0;"></div>
<div style="left:545px;top:519.5px;width:211px;height:8px;background:#c6c6c6;border-radius:4px;"></div>
<div style="left:1004px;top:517px;width:10px;height:12px;background:#f6f6f6;border-left:1px solid #b8b8b8;border-right:1px solid #b8b8b8;"></div>
<svg style="position:absolute;left:1006px;top:519px" width="6" height="8"><path d="M1.5 0.5v7M4 0.5v7" stroke="#8a8a8a" stroke-width="0.9"/></svg>
<div style="left:1014px;top:516px;width:10px;height:14px;background:#f8f8f8;"></div>
<div style="left:52px;top:528px;width:972px;height:2px;background:linear-gradient(#8e8e8e,#b4b4b4);"></div>
<div style="left:52px;top:530px;width:972px;height:13px;background:linear-gradient(#f3f3f3,#dcdcdc);"></div>
<div style="left:128px;top:531px;width:1px;height:12px;background:#bdbdbd;"></div>
<div style="left:431px;top:531px;width:1px;height:12px;background:#bdbdbd;"></div>
<div style="left:557px;top:531px;width:1px;height:12px;background:#bdbdbd;"></div>
<div style="left:669px;top:531px;width:1px;height:12px;background:#bdbdbd;"></div>
<div style="left:697px;top:531px;width:1px;height:12px;background:#bdbdbd;"></div>
<div style="left:724px;top:531px;width:1px;height:12px;background:#bdbdbd;"></div>
<div style="left:747px;top:531px;width:1px;height:12px;background:#bdbdbd;"></div>
<svg style="position:absolute;left:657.5px;top:535.5px" width="8" height="4"><path d="M0 0 L7.4 0 L3.7 3.6 Z" fill="#111"/></svg>
<div class="t" style="left:55.5px;top:533.3px;font-size:8.8px;font-weight:normal;color:#1a1a1a;transform:scaleX(0.96);transform-origin:0 0;">Normal View</div>
<div class="t" style="left:134.5px;top:533.3px;font-size:8.8px;font-weight:normal;color:#1a1a1a;transform:scaleX(0.93);transform-origin:0 0;">Ready</div>
<div class="t" style="left:560.5px;top:533.3px;font-size:9.2px;font-weight:normal;color:#222;transform:scaleX(1.0);transform-origin:0 0;">Sum=80</div>
<svg style="position:absolute;left:1012px;top:533px" width="10" height="10"><path d="M1 9L9 1M4 9L9 4M7 9L9 7" stroke="#9a9a9a" stroke-width="0.8"/></svg>
<div style="left:0px;top:543px;width:1007px;height:3px;background:#5b5f62;"></div>
<div style="left:1007px;top:543px;width:17px;height:3px;background:#f4f4f4;"></div>
<div style="left:0px;top:543px;width:20px;height:3px;background:#2c2c2c;"></div>
</body></html>
